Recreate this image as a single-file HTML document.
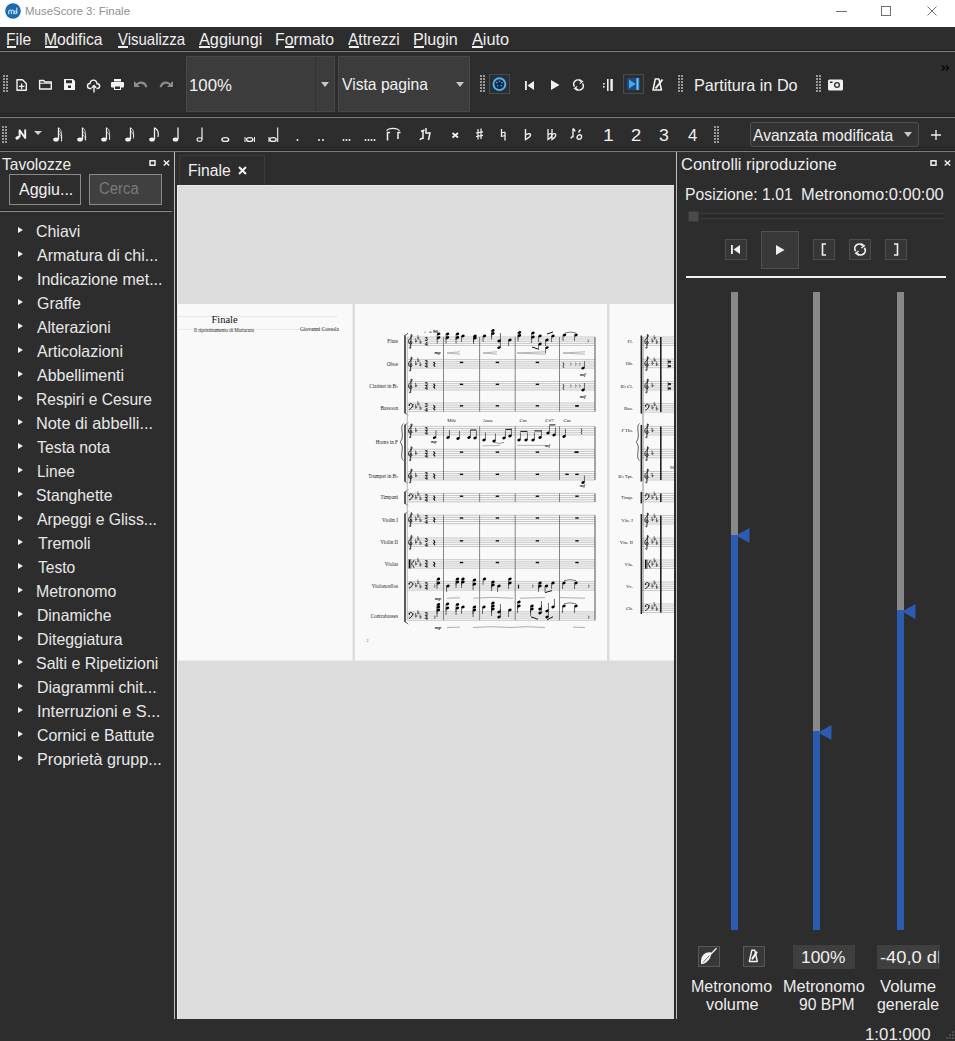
<!DOCTYPE html>
<html><head><meta charset="utf-8">
<style>
*{margin:0;padding:0;box-sizing:border-box}
html,body{width:955px;height:1041px;overflow:hidden;background:#2d2d2d;font-family:"Liberation Sans",sans-serif;color:#e6e6e6}
.a{position:absolute}
.tx{position:absolute;white-space:nowrap;line-height:1}
#title{left:0;top:0;width:955px;height:27px;background:#fff}
.hline{position:absolute;height:1px;background:#7f7f7f;box-shadow:0 -1px 0 #1f1f1f}
.vline{position:absolute;width:1px;background:#5f5f5f}
.combo{position:absolute;background:#3c3c3c;border:1px solid #474747}
.tri{position:absolute;width:0;height:0;border-left:4px solid transparent;border-right:4px solid transparent;border-top:5px solid #c8c8c8}
.handle{position:absolute;width:6px;background-image:radial-gradient(circle at 1px 1px,#999 0.95px,transparent 1.05px);background-size:3px 3px}
u{text-decoration:none;border-bottom:1px solid #f0f0f0;display:inline-block;line-height:1.05}
svg{position:absolute;overflow:visible}
.menu{position:absolute;top:31px;font-size:15.5px;color:#f2f2f2;white-space:nowrap;line-height:1}
.item{position:absolute;left:37px;font-size:15.3px;color:#e8e8e8;white-space:nowrap;line-height:1}
.arr{position:absolute;left:18px;width:0;height:0;border-top:3px solid transparent;border-bottom:3px solid transparent;border-left:5px solid #f0f0f0}
.btn{position:absolute;background:#363636;border:1px solid #4c4c4c}
</style></head>
<body>
<!-- title bar -->
<div id="title" class="a">
  <svg style="left:5px;top:3px" width="16" height="16" viewBox="0 0 16 16">
    <circle cx="8" cy="8" r="7.8" fill="#1a6bb0"/>
    <path d="M3.8 11.2V7.6M3.8 8.2c0-1.6 2.6-1.6 2.6 0v3M6.4 8.2c0-1.6 2.6-1.6 2.6 0v3M9 9.4c0-1.6 2.8-1.6 2.8 0s-2.8 1.6-2.8 0M11.8 10.6V4.6" stroke="#e8f2fa" stroke-width="1" fill="none"/>
  </svg>
    <div class="a" style="left:836px;top:11px;width:11px;height:1px;background:#707070"></div>
  <div class="a" style="left:881px;top:6px;width:10px;height:10px;border:1px solid #707070"></div>
  <svg style="left:926px;top:5px" width="12" height="12" viewBox="0 0 12 12"><path d="M1.5 1.5L10.5 10.5M10.5 1.5L1.5 10.5" stroke="#707070" stroke-width="1"/></svg>
</div>
<!-- menu -->
<div class="hline" style="left:0;top:51px;width:955px"></div>

<!-- toolbar row 1 -->
<div class="handle" style="left:3px;top:75px;height:18px"></div>
<!-- new -->
<svg style="left:0;top:0" width="130" height="100" viewBox="0 0 130 100" fill="none" stroke="#f2f2f2" stroke-width="1.4" stroke-linejoin="round">
  <path d="M17 79.7h5.5l3.8 3.8v6.8h-9.3z"/><path d="M21.6 83.5v5.5M18.9 86.3h5.5" stroke-width="1.3"/>
  <path d="M39.6 80.5h4l1.3 1.5h6.4v7H39.6z"/><path d="M39.6 83.2h11.7" stroke-width="1"/>
</svg>
<!-- save -->
<svg style="left:64px;top:79px" width="11" height="11" viewBox="0 0 11 11">
  <path d="M0 0h9l2 2v9H0z" fill="#f4f4f4"/><rect x="2" y="1.2" width="6" height="3" fill="#2d2d2d"/><rect x="4" y="6.5" width="3" height="2.5" fill="#2d2d2d"/>
</svg>
<!-- cloud -->
<svg style="left:87px;top:79px" width="14" height="14" viewBox="0 0 14 14" fill="none" stroke="#f2f2f2" stroke-width="1.4">
  <path d="M4.5 9.5H3a2.5 2.5 0 0 1 0-5 3.5 3.5 0 0 1 7 0.2 2.4 2.4 0 0 1 0.5 4.8H9.5"/><path d="M7 13.5V6.5M4.8 8.7L7 6.5l2.2 2.2"/>
</svg>
<!-- print -->
<svg style="left:111px;top:79px" width="13" height="11" viewBox="0 0 13 11">
  <rect x="3" y="0" width="7" height="2.5" fill="#f4f4f4"/><rect x="0" y="3" width="13" height="5.5" rx="1" fill="#f4f4f4"/><rect x="3" y="6.5" width="7" height="4.5" fill="#f4f4f4"/><rect x="4" y="7.5" width="5" height="2.5" fill="#2d2d2d"/>
</svg>
<!-- undo / redo -->
<svg style="left:134px;top:80px" width="14" height="8" viewBox="0 0 14 8" fill="#8c8c8c">
  <path d="M0 1l0 6h6L3.8 4.8C6.5 2.8 10 3.5 11.5 7.5L13.5 7C12 1 6.5 0.2 2.6 3.4z"/>
</svg>
<svg style="left:159px;top:80px" width="14" height="8" viewBox="0 0 14 8" fill="#8c8c8c">
  <path d="M14 1l0 6H8l2.2-2.2C7.5 2.8 4 3.5 2.5 7.5L0.5 7C2 1 7.5 0.2 11.4 3.4z"/>
</svg>

<div class="combo" style="left:186px;top:56px;width:149px;height:56px"></div>
<div class="a" style="left:315px;top:57px;width:1px;height:54px;background:#333"></div>
<div class="tri" style="left:321px;top:82px"></div>
<div class="combo" style="left:338px;top:56px;width:132px;height:56px"></div>
<div class="tri" style="left:456px;top:82px"></div>

<div class="handle" style="left:480px;top:75px;height:18px"></div>
<!-- blue midi button -->
<div class="a" style="left:489px;top:74px;width:21px;height:20px;background:#263039;border:1px solid #4d4a44"></div>
<svg style="left:0;top:0" width="520" height="100" viewBox="0 0 520 100">
  <circle cx="499.4" cy="84.2" r="5.9" fill="#0f2a45" stroke="#5ab0ec" stroke-width="1.9"/>
  <g fill="#5ab0ec"><circle cx="496.8" cy="82.6" r=".8"/><circle cx="502" cy="82.6" r=".8"/><circle cx="499.4" cy="81.3" r=".8"/><circle cx="497.6" cy="85.8" r=".8"/><circle cx="501.2" cy="85.8" r=".8"/></g>
</svg>
<!-- prev -->
<svg style="left:525px;top:81px" width="10" height="9" viewBox="0 0 10 9" fill="#f0f0f0"><rect x="0" y="0" width="1.8" height="9"/><path d="M9 0v9L2.5 4.5z"/></svg>
<!-- play -->
<svg style="left:551px;top:80px" width="9" height="10" viewBox="0 0 9 10" fill="#f0f0f0"><path d="M0 0l8.5 5L0 10z"/></svg>
<!-- loop -->
<svg style="left:573px;top:79px" width="11" height="12" viewBox="0 0 11 12" fill="none" stroke="#f0f0f0" stroke-width="1.6">
  <path d="M1.5 7.5A4 4 0 0 1 8 2.6"/><path d="M9.5 4.5A4 4 0 0 1 3 9.4"/>
  <path d="M6.5 0.5L9.5 2.5 6.8 4.6" stroke-width="1.2"/><path d="M4.5 11.5L1.5 9.5 4.2 7.4" stroke-width="1.2"/>
</svg>
<!-- count in -->
<svg style="left:603px;top:79px" width="10" height="12" viewBox="0 0 10 12" fill="#f0f0f0">
  <rect x="0" y="4" width="1.6" height="1.6"/><rect x="0" y="7" width="1.6" height="1.6"/><rect x="4" y="0" width="1.6" height="12"/><rect x="7.4" y="0" width="2.4" height="12"/>
</svg>
<!-- pan button blue -->
<div class="a" style="left:623px;top:74px;width:21px;height:20px;background:#2a2f35;border:1px solid #4d4a44"></div>
<div class="a" style="left:627px;top:78px;width:13px;height:12px;background:#1d4a78"></div>
<svg style="left:0;top:0" width="660" height="100" viewBox="0 0 660 100">
  <path d="M629 79.5L635.8 84 629 88.5z" fill="#3fa9f5"/><rect x="636.4" y="78" width="2.2" height="12" fill="#6cc0f5"/>
</svg>
<!-- metronome -->
<svg style="left:0;top:0" width="670" height="100" viewBox="0 0 670 100" fill="none" stroke="#f4f4f4">
  <path d="M655.3 79h3.6l2.6 11H653z" stroke-width="1.5" stroke-linejoin="round"/><path d="M655.5 88.5L662.5 79.5" stroke-width="2"/>
</svg>
<div class="handle" style="left:678px;top:75px;height:18px"></div>
<div class="handle" style="left:816px;top:75px;height:18px"></div>
<!-- camera -->
<svg style="left:828px;top:78px" width="15" height="13" viewBox="0 0 15 13">
  <rect x="0" y="1.5" width="15" height="11" rx="1.5" fill="#f0f0f0"/><circle cx="9" cy="7" r="3" fill="#2d2d2d"/><circle cx="9" cy="7" r="1.7" fill="#f0f0f0"/><rect x="2" y="3.5" width="2.5" height="1.5" fill="#2d2d2d"/>
</svg>
<svg style="left:0;top:0" width="955" height="80" viewBox="0 0 955 80"><path d="M942 65.5l2.5 2.5-2.5 2.5M946 65.5l2.5 2.5-2.5 2.5" fill="none" stroke="#0a0a0a" stroke-width="1.6"/></svg>
<div class="hline" style="left:0;top:117px;width:955px"></div>
<div class="tx" style="left:25.46px;top:5.87px;font-size:11.8px;color:#8f8f8f;transform:scaleX(0.9707);transform-origin:0 0;">MuseScore 3: Finale</div>
<div class="tx" style="left:6.31px;top:30.58px;font-size:16.5px;color:#f0f0f0;transform:scaleX(0.9468);transform-origin:0 0;">File</div>
<div class="a" style="left:6.61px;top:46px;width:9.54px;height:2px;background:#f0f0f0"></div>
<div class="tx" style="left:44.20px;top:30.58px;font-size:16.5px;color:#f0f0f0;transform:scaleX(0.9517);transform-origin:0 0;">Modifica</div>
<div class="a" style="left:44.50px;top:46px;width:13.08px;height:2px;background:#f0f0f0"></div>
<div class="tx" style="left:117.53px;top:30.58px;font-size:16.5px;color:#f0f0f0;transform:scaleX(0.9064);transform-origin:0 0;">Visualizza</div>
<div class="a" style="left:117.83px;top:46px;width:9.98px;height:2px;background:#f0f0f0"></div>
<div class="tx" style="left:198.56px;top:30.58px;font-size:16.5px;color:#f0f0f0;transform:scaleX(0.9862);transform-origin:0 0;">Aggiungi</div>
<div class="a" style="left:198.86px;top:46px;width:10.85px;height:2px;background:#f0f0f0"></div>
<div class="tx" style="left:275.09px;top:30.58px;font-size:16.5px;color:#f0f0f0;transform:scaleX(0.9596);transform-origin:0 0;">Formato</div>
<div class="a" style="left:285.07px;top:46px;width:8.81px;height:2px;background:#f0f0f0"></div>
<div class="tx" style="left:348.26px;top:30.58px;font-size:16.5px;color:#f0f0f0;transform:scaleX(0.9411);transform-origin:0 0;">Attrezzi</div>
<div class="a" style="left:348.56px;top:46px;width:10.36px;height:2px;background:#f0f0f0"></div>
<div class="tx" style="left:413.27px;top:30.58px;font-size:16.5px;color:#f0f0f0;transform:scaleX(0.9761);transform-origin:0 0;">Plugin</div>
<div class="a" style="left:413.57px;top:46px;width:10.74px;height:2px;background:#f0f0f0"></div>
<div class="tx" style="left:471.56px;top:30.58px;font-size:16.5px;color:#f0f0f0;transform:scaleX(0.9871);transform-origin:0 0;">Aiuto</div>
<div class="a" style="left:471.86px;top:46px;width:10.86px;height:2px;background:#f0f0f0"></div>
<div class="tx" style="left:188.74px;top:76.88px;font-size:16.5px;color:#f0f0f0;transform:scaleX(1.0153);transform-origin:0 0;">100%</div>
<div class="tx" style="left:341.72px;top:76.38px;font-size:16.5px;color:#f0f0f0;transform:scaleX(0.9496);transform-origin:0 0;">Vista pagina</div>
<div class="tx" style="left:693.66px;top:77.47px;font-size:16.5px;color:#f0f0f0;transform:scaleX(0.9825);transform-origin:0 0;">Partitura in Do</div>
<!-- toolbar row 2 -->
<div class="handle" style="left:2px;top:126px;height:18px"></div>
<svg style="left:0;top:0" width="60" height="160" viewBox="0 0 60 160">
  <path d="M19.6 137V130.2L25.2 138V129.5" fill="none" stroke="#f2f2f2" stroke-width="1.9" stroke-linejoin="round"/>
  <ellipse cx="17.6" cy="137.8" rx="2.3" ry="1.6" fill="#f2f2f2" transform="rotate(-25 17.6 137.8)"/>
</svg>
<div class="tri" style="left:34px;top:131px;border-left-width:4.5px;border-right-width:4.5px;border-top-width:4.5px;border-top-color:#d0d0d0"></div>
<!-- notes 64th,32nd,16th,8th ... -->
<svg style="left:0;top:0" width="955" height="160">
 <g fill="#f2f2f2" stroke="#f2f2f2">
  <!-- note heads+stems; x centers: 58,82,106,130,154,177,201 -->
  <g id="n64"><ellipse cx="56" cy="139.5" rx="2.8" ry="2.1" stroke="none"/><path d="M58.5 139V127.5" stroke-width="1.3"/><path d="M59 128c2 1.5 3 3 2.5 13.5M59 131c2 1.5 3 3 2.5 10M59 134c2 1 2.5 2 2.5 7" stroke-width="1" fill="none" opacity="0.7"/></g>
  <g><ellipse cx="80" cy="139.5" rx="2.8" ry="2.1" stroke="none"/><path d="M82.5 139V127.5" stroke-width="1.3"/><path d="M83 128c2 1.5 3 3 2.5 12M83 131.5c2 1.5 3 3 2.5 9M83 135c2 1 2.5 2 2.2 5" stroke-width="1" fill="none" opacity="0.7"/></g>
  <g><ellipse cx="104" cy="139.5" rx="2.8" ry="2.1" stroke="none"/><path d="M106.5 139V127.5" stroke-width="1.3"/><path d="M107 128c2 1.5 3 3 2.5 11M107 132c2 1.5 3 3 2.5 8" stroke-width="1" fill="none" opacity="0.75"/></g>
  <g><ellipse cx="128" cy="139.5" rx="2.8" ry="2.1" stroke="none"/><path d="M130.5 139V127.5" stroke-width="1.3"/><path d="M131 128c2 1.5 3 3 2.5 9M131 131.5c2 1.5 3 3 2.5 7" stroke-width="1" fill="none" opacity="0.8"/></g>
  <g><ellipse cx="152" cy="139.5" rx="2.8" ry="2.1" stroke="none"/><path d="M154.5 139V127.5" stroke-width="1.3"/><path d="M155 128c2.5 2 4 3.5 3 9" stroke-width="1.2" fill="none"/></g>
  <g><ellipse cx="175.5" cy="139.5" rx="2.8" ry="2.1" stroke="none"/><path d="M178 139V127.5" stroke-width="1.3"/></g>
  <g><ellipse cx="199.5" cy="139.5" rx="2.5" ry="1.8" fill="none" stroke-width="1.1"/><path d="M202 139V127.5" stroke-width="1.2"/></g>
  <ellipse cx="225.3" cy="139.5" rx="3.4" ry="1.9" fill="none" stroke-width="1.4"/>
  <g><ellipse cx="249.7" cy="139.5" rx="3.2" ry="1.9" fill="none" stroke-width="1.4"/><path d="M245 137v5M254.5 137v5" stroke-width="1"/></g>
  <g><ellipse cx="273" cy="139.5" rx="3.2" ry="1.9" fill="none" stroke-width="1.4"/><path d="M269 137v5M277.7 127.5v14.5" stroke-width="1.1"/></g>
  <g stroke="none"><circle cx="297.5" cy="140" r="1"/>
   <circle cx="319" cy="140" r="1"/><circle cx="323" cy="140" r="1"/>
   <circle cx="343.5" cy="140" r="1"/><circle cx="346.5" cy="140" r="1"/><circle cx="349.5" cy="140" r="1"/>
   <circle cx="365.5" cy="140" r="1"/><circle cx="368.5" cy="140" r="1"/><circle cx="371.5" cy="140" r="1"/><circle cx="374.5" cy="140" r="1"/></g>
  <!-- tie -->
  <g><path d="M386.5 131c2-3.5 11-3.5 13 0" fill="none" stroke-width="1.1"/><path d="M387.5 132v8.5M398 132v7" stroke-width="1.5"/><path d="M387.5 132.5h2.5M398 132.5h2.5" stroke-width="1.5"/></g>
  <!-- flip -->
  <g><path d="M420 140c1-2 2-1 3-2M421 131.5l3.5-1.5M423 131v8" stroke-width="1.5" fill="none"/><path d="M426 128v5h4l-1.5 7" stroke-width="1.5" fill="none"/></g>
  <!-- x -->
  <path d="M452.5 133l5.5 4.5M458 133l-5.5 4.5" stroke-width="1.8"/>
  <!-- sharp -->
  <path d="M478 129v10.5M481 128.5v10.5M476 133l7-1.2M476 136.5l7-1.2" stroke-width="1.2"/>
  <!-- natural -->
  <path d="M501.5 129v8M505 132v8.5M501.5 133l3.5-1M501.5 136.5l3.5-1" stroke-width="1.3"/>
  <!-- flat -->
  <path d="M525.5 129v10.5c2-1 5-2.5 5-4.5s-3-1.5-5 0" stroke-width="1.4" fill="none"/>
  <!-- double flat -->
  <path d="M548 129v10.5c1.5-1 3.8-2.5 3.8-4.5s-2.2-1.5-3.8 0M552 129v10.5c1.5-1 3.8-2.5 3.8-4.5s-2.2-1.5-3.8 0" stroke-width="1.3" fill="none"/>
  <!-- voice -->
  <path d="M571 138.5c0-1.5 2-2.2 2-1V128.5M573 128.5c1 1 2 1.5 2 3M577 137c1-3 5-3 4.5 0s-4.5 3-4.5 0M580.5 129.5l-2 3" stroke-width="1.4" fill="none"/>
 </g>
</svg>
<div class="handle" style="left:714px;top:126px;height:18px"></div>
<div class="combo" style="left:750px;top:122px;width:169px;height:25px;background:#333333;border-color:#505050;border-radius:3px"></div>
<div class="tri" style="left:904px;top:132px"></div>
<svg style="left:931px;top:130px" width="10" height="10" viewBox="0 0 10 10"><path d="M5 0v10M0 5h10" stroke="#f0f0f0" stroke-width="1.3"/></svg>
<div class="a" style="left:0;top:113px;width:955px;height:1px;background:#242424"></div>
<div class="a" style="left:0;top:147px;width:955px;height:1px;background:#242424"></div>
<div class="hline" style="left:0;top:151px;width:955px"></div>
<!-- left panel -->
<svg style="left:149px;top:160px" width="7" height="6" viewBox="0 0 7 6"><rect x="1" y="0.8" width="5" height="4.4" fill="none" stroke="#f0f0f0" stroke-width="1.5"/></svg>
<svg style="left:163px;top:160px" width="7" height="6" viewBox="0 0 7 6"><path d="M0.8 0.5L6.2 5.5M6.2 0.5L0.8 5.5" stroke="#f0f0f0" stroke-width="1.5"/></svg>
<div class="a" style="left:9px;top:174px;width:72px;height:31px;border:1px solid #8a8a8a;background:#2d2d2d"></div>
<div class="a" style="left:89px;top:174px;width:73px;height:31px;border:1px solid #8a8a8a;background:#404040"></div>
<div class="hline" style="left:0;top:211px;width:172px;background:#8a8a8a"></div>
<div class="vline" style="left:174px;top:152px;height:867px;background:#bdbdbd"></div>
<div class="tx" style="left:602.74px;top:126.57px;font-size:16.5px;color:#f0f0f0;transform:scaleX(1.1771);transform-origin:0 0;">1</div>
<div class="tx" style="left:630.98px;top:126.57px;font-size:16.5px;color:#f0f0f0;transform:scaleX(1.1128);transform-origin:0 0;">2</div>
<div class="tx" style="left:659.34px;top:126.57px;font-size:16.5px;color:#f0f0f0;transform:scaleX(1.0718);transform-origin:0 0;">3</div>
<div class="tx" style="left:687.63px;top:126.57px;font-size:16.5px;color:#f0f0f0;transform:scaleX(1.0081);transform-origin:0 0;">4</div>
<div class="tx" style="left:753.36px;top:127.47px;font-size:16.5px;color:#f0f0f0;transform:scaleX(0.9457);transform-origin:0 0;">Avanzata modificata</div>
<div class="tx" style="left:1.95px;top:155.97px;font-size:16.5px;color:#ececec;transform:scaleX(0.9423);transform-origin:0 0;">Tavolozze</div>
<div class="tx" style="left:18.86px;top:180.97px;font-size:16.5px;color:#f0f0f0;transform:scaleX(0.9704);transform-origin:0 0;">Aggiu...</div>
<div class="tx" style="left:98.85px;top:181.40px;font-size:16px;color:#7a7a7a;transform:scaleX(0.9327);transform-origin:0 0;">Cerca</div>
<div class="arr" style="top:227px"></div>
<div class="tx" style="left:36.10px;top:222.78px;font-size:16.5px;color:#e8e8e8;transform:scaleX(0.9651);transform-origin:0 0;">Chiavi</div>
<div class="arr" style="top:251px"></div>
<div class="tx" style="left:37.46px;top:246.78px;font-size:16.5px;color:#e8e8e8;transform:scaleX(0.9710);transform-origin:0 0;">Armatura di chi...</div>
<div class="arr" style="top:275px"></div>
<div class="tx" style="left:36.52px;top:270.78px;font-size:16.5px;color:#e8e8e8;transform:scaleX(0.9706);transform-origin:0 0;">Indicazione met...</div>
<div class="arr" style="top:299px"></div>
<div class="tx" style="left:36.50px;top:294.78px;font-size:16.5px;color:#e8e8e8;transform:scaleX(0.9656);transform-origin:0 0;">Graffe</div>
<div class="arr" style="top:323px"></div>
<div class="tx" style="left:37.46px;top:318.78px;font-size:16.5px;color:#e8e8e8;transform:scaleX(0.9578);transform-origin:0 0;">Alterazioni</div>
<div class="arr" style="top:347px"></div>
<div class="tx" style="left:37.46px;top:342.78px;font-size:16.5px;color:#e8e8e8;transform:scaleX(0.9667);transform-origin:0 0;">Articolazioni</div>
<div class="arr" style="top:371px"></div>
<div class="tx" style="left:37.46px;top:366.78px;font-size:16.5px;color:#e8e8e8;transform:scaleX(0.9681);transform-origin:0 0;">Abbellimenti</div>
<div class="arr" style="top:395px"></div>
<div class="tx" style="left:35.92px;top:390.78px;font-size:16.5px;color:#e8e8e8;transform:scaleX(0.9435);transform-origin:0 0;">Respiri e Cesure</div>
<div class="arr" style="top:419px"></div>
<div class="tx" style="left:36.15px;top:414.78px;font-size:16.5px;color:#e8e8e8;transform:scaleX(0.9891);transform-origin:0 0;">Note di abbelli...</div>
<div class="arr" style="top:443px"></div>
<div class="tx" style="left:36.94px;top:438.78px;font-size:16.5px;color:#e8e8e8;transform:scaleX(0.9594);transform-origin:0 0;">Testa nota</div>
<div class="arr" style="top:467px"></div>
<div class="tx" style="left:36.72px;top:462.78px;font-size:16.5px;color:#e8e8e8;transform:scaleX(0.9378);transform-origin:0 0;">Linee</div>
<div class="arr" style="top:491px"></div>
<div class="tx" style="left:36.29px;top:486.78px;font-size:16.5px;color:#e8e8e8;transform:scaleX(0.9582);transform-origin:0 0;">Stanghette</div>
<div class="arr" style="top:515px"></div>
<div class="tx" style="left:37.26px;top:510.77px;font-size:16.5px;color:#e8e8e8;transform:scaleX(0.9547);transform-origin:0 0;">Arpeggi e Gliss...</div>
<div class="arr" style="top:539px"></div>
<div class="tx" style="left:37.84px;top:534.77px;font-size:16.5px;color:#e8e8e8;transform:scaleX(0.9655);transform-origin:0 0;">Tremoli</div>
<div class="arr" style="top:563px"></div>
<div class="tx" style="left:37.85px;top:558.77px;font-size:16.5px;color:#e8e8e8;transform:scaleX(0.9452);transform-origin:0 0;">Testo</div>
<div class="arr" style="top:587px"></div>
<div class="tx" style="left:36.49px;top:582.77px;font-size:16.5px;color:#e8e8e8;transform:scaleX(0.9640);transform-origin:0 0;">Metronomo</div>
<div class="arr" style="top:611px"></div>
<div class="tx" style="left:37.00px;top:606.77px;font-size:16.5px;color:#e8e8e8;transform:scaleX(0.9544);transform-origin:0 0;">Dinamiche</div>
<div class="arr" style="top:635px"></div>
<div class="tx" style="left:36.99px;top:630.77px;font-size:16.5px;color:#e8e8e8;transform:scaleX(0.9633);transform-origin:0 0;">Diteggiatura</div>
<div class="arr" style="top:659px"></div>
<div class="tx" style="left:36.28px;top:654.77px;font-size:16.5px;color:#e8e8e8;transform:scaleX(0.9663);transform-origin:0 0;">Salti e Ripetizioni</div>
<div class="arr" style="top:683px"></div>
<div class="tx" style="left:36.98px;top:678.77px;font-size:16.5px;color:#e8e8e8;transform:scaleX(0.9666);transform-origin:0 0;">Diagrammi chit...</div>
<div class="arr" style="top:707px"></div>
<div class="tx" style="left:36.79px;top:702.77px;font-size:16.5px;color:#e8e8e8;transform:scaleX(0.9883);transform-origin:0 0;">Interruzioni e S...</div>
<div class="arr" style="top:731px"></div>
<div class="tx" style="left:36.71px;top:726.77px;font-size:16.5px;color:#e8e8e8;transform:scaleX(0.9614);transform-origin:0 0;">Cornici e Battute</div>
<div class="arr" style="top:755px"></div>
<div class="tx" style="left:36.97px;top:750.77px;font-size:16.5px;color:#e8e8e8;transform:scaleX(0.9787);transform-origin:0 0;">Proprietà grupp...</div>
<!-- tab bar -->
<div class="a" style="left:179px;top:155px;width:86px;height:31px;background:#2d2d2d;border:1px solid #3a3a3a;border-bottom:none"></div>
<svg style="left:238px;top:166px" width="9" height="9" viewBox="0 0 9 9"><path d="M1 1L8 8M8 1L1 8" stroke="#f5f5f5" stroke-width="2"/></svg>
<!-- canvas -->
<div class="a" style="left:177px;top:185px;width:497px;height:834px;background:#dcdcdc;border-left:1px solid #ebebeb;border-top:1px solid #ebebeb"></div>
<div class="vline" style="left:676px;top:152px;height:867px;background:#bdbdbd"></div>
<!-- right panel -->
<svg style="left:930px;top:160px" width="7" height="6" viewBox="0 0 7 6"><rect x="1" y="0.8" width="5" height="4.4" fill="none" stroke="#f0f0f0" stroke-width="1.5"/></svg>
<svg style="left:944px;top:160px" width="7" height="6" viewBox="0 0 7 6"><path d="M0.8 0.5L6.2 5.5M6.2 0.5L0.8 5.5" stroke="#f0f0f0" stroke-width="1.5"/></svg>
<!-- slider -->
<div class="a" style="left:700px;top:213px;width:245px;height:6px;border-top:1px solid #3c3c3c;border-bottom:1px solid #3c3c3c;background:#2a2a2a"></div>
<div class="a" style="left:688px;top:211px;width:11px;height:11px;background:#4a4a4a;border:1px solid #3a3a3a;border-radius:1px"></div>
<!-- transport buttons -->
<div class="btn" style="left:725px;top:239px;width:22px;height:21px"></div>
<svg style="left:731px;top:245px" width="10" height="9" viewBox="0 0 10 9" fill="#f0f0f0"><rect x="0" y="0" width="1.8" height="9"/><path d="M9 0v9L2.5 4.5z"/></svg>
<div class="btn" style="left:761px;top:231px;width:38px;height:38px;background:#393939;border-color:#505050"></div>
<svg style="left:776px;top:245px" width="9" height="10" viewBox="0 0 9 10" fill="#f0f0f0"><path d="M0 0l8.5 5L0 10z"/></svg>
<div class="btn" style="left:813px;top:239px;width:22px;height:21px"></div>
<svg style="left:821px;top:243px" width="6" height="13" viewBox="0 0 6 13"><path d="M5 1H1.5v11H5" fill="none" stroke="#f0f0f0" stroke-width="1.6"/></svg>
<div class="btn" style="left:849px;top:239px;width:22px;height:21px"></div>
<svg style="left:854px;top:243px" width="12" height="13" viewBox="0 0 11 12" fill="none" stroke="#f0f0f0" stroke-width="1.6">
  <path d="M1.5 7.5A4 4 0 0 1 8 2.6"/><path d="M9.5 4.5A4 4 0 0 1 3 9.4"/>
  <path d="M6.5 0.5L9.5 2.5 6.8 4.6" stroke-width="1.2"/><path d="M4.5 11.5L1.5 9.5 4.2 7.4" stroke-width="1.2"/>
</svg>
<div class="btn" style="left:885px;top:239px;width:22px;height:21px"></div>
<svg style="left:893px;top:243px" width="6" height="13" viewBox="0 0 6 13"><path d="M1 1h3.5v11H1" fill="none" stroke="#f0f0f0" stroke-width="1.6"/></svg>
<div class="a" style="left:686px;top:276px;width:260px;height:2px;background:#f0f0f0"></div>
<!-- volume sliders -->
<div class="a" style="left:731px;top:292px;width:7px;height:243px;background:#888"></div>
<div class="a" style="left:731px;top:535px;width:7px;height:395px;background:#2c5cb2"></div>
<svg style="left:736px;top:528px" width="14" height="15" viewBox="0 0 14 15"><path d="M0 7.5L13.5 0v15z" fill="#2c5cb2"/></svg>
<div class="a" style="left:813px;top:292px;width:7px;height:439px;background:#888"></div>
<div class="a" style="left:813px;top:731px;width:7px;height:199px;background:#2c5cb2"></div>
<svg style="left:818px;top:725px" width="14" height="15" viewBox="0 0 14 15"><path d="M0 7.5L13.5 0v15z" fill="#2c5cb2"/></svg>
<div class="a" style="left:897px;top:292px;width:7px;height:318px;background:#888"></div>
<div class="a" style="left:897px;top:610px;width:7px;height:320px;background:#2c5cb2"></div>
<svg style="left:902px;top:604px" width="14" height="15" viewBox="0 0 14 15"><path d="M0 7.5L13.5 0v15z" fill="#2c5cb2"/></svg>
<!-- bottom buttons -->
<div class="btn" style="left:698px;top:946px;width:22px;height:21px;background:#383838;border-color:#575757"></div>
<svg style="left:0;top:0" width="720" height="1041" viewBox="0 0 720 1041">
  <path d="M701.2 964.3c-.8-4.5.5-9.5 5-11.5 1.5-.6 3-.8 4.8-.6.5 5-2.8 11-9.8 12.1z" fill="#f4f4f4"/>
  <path d="M703 962.5L710.5 954.8M710 955L716.5 948.3" stroke="#f4f4f4" stroke-width="1.3"/>
  <path d="M703 962.5L709.5 955.5" stroke="#383838" stroke-width=".7"/>
</svg>
<div class="btn" style="left:743px;top:946px;width:22px;height:21px;background:#383838;border-color:#575757"></div>
<svg style="left:0;top:0" width="770" height="1041" viewBox="0 0 770 1041" fill="none" stroke="#f4f4f4">
  <path d="M751.8 950.3h3l2.5 11.2h-8z" stroke-width="1.4" stroke-linejoin="round"/><path d="M752.5 958.5L756.5 952.5" stroke-width="2.2" stroke-linecap="round"/>
</svg>
<div class="a" style="left:793px;top:945px;width:62px;height:24px;background:#3f3f3f"></div>
<div class="a" style="left:877px;top:945px;width:63px;height:24px;background:#3f3f3f;overflow:hidden">
  </div>
<svg style="left:943px;top:1029px" width="12" height="12" viewBox="0 0 12 12" fill="#777"><circle cx="10" cy="3" r="0.8"/><circle cx="7" cy="6" r="0.8"/><circle cx="10" cy="6" r="0.8"/><circle cx="4" cy="9" r="0.8"/><circle cx="7" cy="9" r="0.8"/><circle cx="10" cy="9" r="0.8"/></svg>
<div class="tx" style="left:187.71px;top:163.20px;font-size:16px;color:#f0f0f0;transform:scaleX(0.9793);transform-origin:0 0;">Finale</div>
<div class="tx" style="left:680.68px;top:155.97px;font-size:16.5px;color:#ececec;transform:scaleX(0.9990);transform-origin:0 0;">Controlli riproduzione</div>
<div class="tx" style="left:685.40px;top:185.88px;font-size:16.5px;color:#ececec;transform:scaleX(0.9542);transform-origin:0 0;">Posizione: 1.01</div>
<div class="tx" style="left:801.24px;top:185.88px;font-size:16.5px;color:#ececec;transform:scaleX(0.9973);transform-origin:0 0;">Metronomo:0:00:00</div>
<div class="tx" style="left:801.00px;top:949.18px;font-size:16.5px;color:#f0f0f0;transform:scaleX(1.0499);transform-origin:0 0;">100%</div>
<div class="a" style="left:877px;top:945px;width:62px;height:23px;overflow:hidden"><div class="tx" style="left:2.78px;top:4.17px;font-size:16.5px;color:#f0f0f0;transform:scaleX(1.1093);transform-origin:0 0;">-40,0 dB</div></div>
<div class="tx" style="left:690.68px;top:977.68px;font-size:16.5px;color:#ececec;transform:scaleX(0.9726);transform-origin:0 0;">Metronomo</div>
<div class="tx" style="left:706.16px;top:995.77px;font-size:16.5px;color:#ececec;transform:scaleX(0.9880);transform-origin:0 0;">volume</div>
<div class="tx" style="left:782.67px;top:977.68px;font-size:16.5px;color:#ececec;transform:scaleX(0.9788);transform-origin:0 0;">Metronomo</div>
<div class="tx" style="left:798.80px;top:995.77px;font-size:16.5px;color:#ececec;transform:scaleX(0.9482);transform-origin:0 0;">90 BPM</div>
<div class="tx" style="left:879.92px;top:977.68px;font-size:16.5px;color:#ececec;transform:scaleX(1.0176);transform-origin:0 0;">Volume</div>
<div class="tx" style="left:877.32px;top:995.77px;font-size:16.5px;color:#ececec;transform:scaleX(0.9652);transform-origin:0 0;">generale</div>
<div class="tx" style="left:864.74px;top:1026.47px;font-size:16.5px;color:#ececec;transform:scaleX(1.0197);transform-origin:0 0;">1:01:000</div>
<svg style="left:0;top:0" width="955" height="1041" viewBox="0 0 955 1041">
<defs><clipPath id="cv"><rect x="177" y="185" width="497" height="834"/></clipPath></defs>
<g clip-path="url(#cv)">
<rect x="178" y="304" width="174.5" height="356.5" fill="#f9f9f9"/>
<rect x="355" y="304" width="252" height="356.5" fill="#f9f9f9"/>
<rect x="609.5" y="304" width="80" height="356.5" fill="#f9f9f9"/>
<path d="M178 316.6H337M178 329.3H337" stroke="#e6e6e6" stroke-width="1"/>
<text x="224.5" y="323" font-family="Liberation Serif" font-size="10.5" text-anchor="middle" fill="#111">Finale</text>
<text x="224" y="331.5" font-family="Liberation Serif" font-size="5.6" text-anchor="middle" fill="#222" textLength="60" lengthAdjust="spacingAndGlyphs">Il ripristinamento di Mariacuta</text>
<text x="339" y="330.8" font-family="Liberation Serif" font-size="5.6" text-anchor="end" fill="#222" textLength="39" lengthAdjust="spacingAndGlyphs">Giovanni Cossola</text>
<path d="M407.3 337.00H595M407.3 339.12H595M407.3 341.24H595M407.3 343.36H595M407.3 345.48H595" stroke="#8a8a8a" stroke-width="0.45" fill="none"/>
<path d="M407.3 359.60H595M407.3 361.72H595M407.3 363.84H595M407.3 365.96H595M407.3 368.08H595" stroke="#8a8a8a" stroke-width="0.45" fill="none"/>
<path d="M407.3 381.50H595M407.3 383.62H595M407.3 385.74H595M407.3 387.86H595M407.3 389.98H595" stroke="#8a8a8a" stroke-width="0.45" fill="none"/>
<path d="M407.3 403.00H595M407.3 405.12H595M407.3 407.24H595M407.3 409.36H595M407.3 411.48H595" stroke="#8a8a8a" stroke-width="0.45" fill="none"/>
<path d="M407.3 426.40H595M407.3 428.52H595M407.3 430.64H595M407.3 432.76H595M407.3 434.88H595" stroke="#8a8a8a" stroke-width="0.45" fill="none"/>
<path d="M407.3 449.30H595M407.3 451.42H595M407.3 453.54H595M407.3 455.66H595M407.3 457.78H595" stroke="#8a8a8a" stroke-width="0.45" fill="none"/>
<path d="M407.3 471.50H595M407.3 473.62H595M407.3 475.74H595M407.3 477.86H595M407.3 479.98H595" stroke="#8a8a8a" stroke-width="0.45" fill="none"/>
<path d="M407.3 493.40H595M407.3 495.52H595M407.3 497.64H595M407.3 499.76H595M407.3 501.88H595" stroke="#8a8a8a" stroke-width="0.45" fill="none"/>
<path d="M407.3 515.20H595M407.3 517.32H595M407.3 519.44H595M407.3 521.56H595M407.3 523.68H595" stroke="#8a8a8a" stroke-width="0.45" fill="none"/>
<path d="M407.3 538.00H595M407.3 540.12H595M407.3 542.24H595M407.3 544.36H595M407.3 546.48H595" stroke="#8a8a8a" stroke-width="0.45" fill="none"/>
<path d="M407.3 559.70H595M407.3 561.82H595M407.3 563.94H595M407.3 566.06H595M407.3 568.18H595" stroke="#8a8a8a" stroke-width="0.45" fill="none"/>
<path d="M407.3 581.60H595M407.3 583.72H595M407.3 585.84H595M407.3 587.96H595M407.3 590.08H595" stroke="#8a8a8a" stroke-width="0.45" fill="none"/>
<path d="M407.3 611.80H595M407.3 613.92H595M407.3 616.04H595M407.3 618.16H595M407.3 620.28H595" stroke="#8a8a8a" stroke-width="0.45" fill="none"/>
<path d="M443.5 337V411.48" stroke="#555" stroke-width="0.7"/>
<path d="M479.6 337V411.48" stroke="#555" stroke-width="0.7"/>
<path d="M515.2 337V411.48" stroke="#555" stroke-width="0.7"/>
<path d="M559.5 337V411.48" stroke="#555" stroke-width="0.7"/>
<path d="M595 337V411.48" stroke="#777" stroke-width="1.3"/>
<path d="M405 335.5V412.98" stroke="#333" stroke-width="1.6"/>
<path d="M404.5 335.5q2 0 3.5 -2.5M404.5 412.98q2 0 3.5 2.5" stroke="#333" stroke-width="0.8" fill="none"/>
<path d="M443.5 426.4V479.98" stroke="#555" stroke-width="0.7"/>
<path d="M479.6 426.4V479.98" stroke="#555" stroke-width="0.7"/>
<path d="M515.2 426.4V479.98" stroke="#555" stroke-width="0.7"/>
<path d="M559.5 426.4V479.98" stroke="#555" stroke-width="0.7"/>
<path d="M595 426.4V479.98" stroke="#777" stroke-width="1.3"/>
<path d="M405 424.9V481.48" stroke="#333" stroke-width="1.6"/>
<path d="M404.5 424.9q2 0 3.5 -2.5M404.5 481.48q2 0 3.5 2.5" stroke="#333" stroke-width="0.8" fill="none"/>
<path d="M443.5 493.4V501.88" stroke="#555" stroke-width="0.7"/>
<path d="M479.6 493.4V501.88" stroke="#555" stroke-width="0.7"/>
<path d="M515.2 493.4V501.88" stroke="#555" stroke-width="0.7"/>
<path d="M559.5 493.4V501.88" stroke="#555" stroke-width="0.7"/>
<path d="M595 493.4V501.88" stroke="#777" stroke-width="1.3"/>
<path d="M405 491.9V503.38" stroke="#333" stroke-width="1.6"/>
<path d="M404.5 491.9q2 0 3.5 -2.5M404.5 503.38q2 0 3.5 2.5" stroke="#333" stroke-width="0.8" fill="none"/>
<path d="M443.5 515.2V620.28" stroke="#555" stroke-width="0.7"/>
<path d="M479.6 515.2V620.28" stroke="#555" stroke-width="0.7"/>
<path d="M515.2 515.2V620.28" stroke="#555" stroke-width="0.7"/>
<path d="M559.5 515.2V620.28" stroke="#555" stroke-width="0.7"/>
<path d="M595 515.2V620.28" stroke="#777" stroke-width="1.3"/>
<path d="M405 513.7V621.78" stroke="#333" stroke-width="1.6"/>
<path d="M404.5 513.7q2 0 3.5 -2.5M404.5 621.78q2 0 3.5 2.5" stroke="#333" stroke-width="0.8" fill="none"/>
<path d="M407.3 337V620.28" stroke="#bbb" stroke-width="1"/>
<path d="M403.5 423.5c-3 2-1 8-1.2 12.5 0 3-1.3 5.5-2.3 6 1 .5 2.3 3 2.3 6-.2 4.5-1.8 10.5 1.2 12.5" stroke="#333" stroke-width="0.8" fill="none"/>
<text x="398" y="342.5" font-family="Liberation Serif" font-size="5.2" text-anchor="end" fill="#1a1a1a">Flute</text>
<text x="398" y="365.5" font-family="Liberation Serif" font-size="5.2" text-anchor="end" fill="#1a1a1a">Oboe</text>
<text x="398" y="387.5" font-family="Liberation Serif" font-size="5.2" text-anchor="end" fill="#1a1a1a">Clarinet in B♭</text>
<text x="398" y="409.5" font-family="Liberation Serif" font-size="5.2" text-anchor="end" fill="#1a1a1a">Bassoon</text>
<text x="398" y="443.5" font-family="Liberation Serif" font-size="5.2" text-anchor="end" fill="#1a1a1a">Horns in F</text>
<text x="398" y="477.5" font-family="Liberation Serif" font-size="5.2" text-anchor="end" fill="#1a1a1a">Trumpet in B♭</text>
<text x="398" y="499.0" font-family="Liberation Serif" font-size="5.2" text-anchor="end" fill="#1a1a1a">Timpani</text>
<text x="398" y="521.5" font-family="Liberation Serif" font-size="5.2" text-anchor="end" fill="#1a1a1a">Violin I</text>
<text x="398" y="544.0" font-family="Liberation Serif" font-size="5.2" text-anchor="end" fill="#1a1a1a">Violin II</text>
<text x="398" y="566.0" font-family="Liberation Serif" font-size="5.2" text-anchor="end" fill="#1a1a1a">Violas</text>
<text x="398" y="588.0" font-family="Liberation Serif" font-size="5.2" text-anchor="end" fill="#1a1a1a">Violoncellos</text>
<text x="398" y="618.0" font-family="Liberation Serif" font-size="5.2" text-anchor="end" fill="#1a1a1a">Contrabasses</text>
<path d="M410.59999999999997 348.2c-.9.3-1.6-.3-1-1M410.59999999999997 348.2L411.09999999999997 334.6c.9-.5 1.4 1 .3 2.4-1.3 1.5-2.9 2.6-2.9 4.6 0 1.6 1.2 2.6 2.4 2.5 1.3-.2 1.5-2.3.2-2.6-.9-.2-1.6.6-1.2 1.4" stroke="#111" stroke-width="0.85" fill="none"/>
<path d="M415.6 338.2V342.4c.8-.3 1.4-.8 1.4-1.4s-.9-.6-1.4 0" stroke="#111" stroke-width=".55" fill="none"/>
<path d="M417.8 335.1V339.3c.8-.3 1.4-.8 1.4-1.4s-.9-.6-1.4 0" stroke="#111" stroke-width=".55" fill="none"/>
<path d="M420.0 339.3V343.5c.8-.3 1.4-.8 1.4-1.4s-.9-.6-1.4 0" stroke="#111" stroke-width=".55" fill="none"/>
<text x="426.2" y="341.2" font-family="Liberation Sans" font-weight="bold" font-size="5.4" text-anchor="middle" fill="#000">3</text>
<text x="426.2" y="345.5" font-family="Liberation Sans" font-weight="bold" font-size="5.4" text-anchor="middle" fill="#000">4</text>
<path d="M410.59999999999997 370.8c-.9.3-1.6-.3-1-1M410.59999999999997 370.8L411.09999999999997 357.20000000000005c.9-.5 1.4 1 .3 2.4-1.3 1.5-2.9 2.6-2.9 4.6 0 1.6 1.2 2.6 2.4 2.5 1.3-.2 1.5-2.3.2-2.6-.9-.2-1.6.6-1.2 1.4" stroke="#111" stroke-width="0.85" fill="none"/>
<path d="M415.6 360.8V365.0c.8-.3 1.4-.8 1.4-1.4s-.9-.6-1.4 0" stroke="#111" stroke-width=".55" fill="none"/>
<path d="M417.8 357.70000000000005V361.90000000000003c.8-.3 1.4-.8 1.4-1.4s-.9-.6-1.4 0" stroke="#111" stroke-width=".55" fill="none"/>
<path d="M420.0 361.90000000000003V366.1c.8-.3 1.4-.8 1.4-1.4s-.9-.6-1.4 0" stroke="#111" stroke-width=".55" fill="none"/>
<text x="426.2" y="363.8" font-family="Liberation Sans" font-weight="bold" font-size="5.4" text-anchor="middle" fill="#000">3</text>
<text x="426.2" y="368.1" font-family="Liberation Sans" font-weight="bold" font-size="5.4" text-anchor="middle" fill="#000">4</text>
<path d="M410.59999999999997 392.7c-.9.3-1.6-.3-1-1M410.59999999999997 392.7L411.09999999999997 379.1c.9-.5 1.4 1 .3 2.4-1.3 1.5-2.9 2.6-2.9 4.6 0 1.6 1.2 2.6 2.4 2.5 1.3-.2 1.5-2.3.2-2.6-.9-.2-1.6.6-1.2 1.4" stroke="#111" stroke-width="0.85" fill="none"/>
<path d="M415.6 382.7V386.9c.8-.3 1.4-.8 1.4-1.4s-.9-.6-1.4 0" stroke="#111" stroke-width=".55" fill="none"/>
<text x="426.2" y="385.7" font-family="Liberation Sans" font-weight="bold" font-size="5.4" text-anchor="middle" fill="#000">3</text>
<text x="426.2" y="390.0" font-family="Liberation Sans" font-weight="bold" font-size="5.4" text-anchor="middle" fill="#000">4</text>
<path d="M409.0 404.9c.8-2 3.8-1.8 3.5.8-.2 2-1.9 3.2-3.5 3.9" stroke="#111" stroke-width="1" fill="none"/><circle cx="409.3" cy="405.3" r=".8" fill="#111"/><circle cx="413.4" cy="404.3" r=".45" fill="#111"/><circle cx="413.4" cy="406" r=".45" fill="#111"/>
<path d="M415.6 404.2V408.4c.8-.3 1.4-.8 1.4-1.4s-.9-.6-1.4 0" stroke="#111" stroke-width=".55" fill="none"/>
<path d="M417.8 401.1V405.3c.8-.3 1.4-.8 1.4-1.4s-.9-.6-1.4 0" stroke="#111" stroke-width=".55" fill="none"/>
<path d="M420.0 405.3V409.5c.8-.3 1.4-.8 1.4-1.4s-.9-.6-1.4 0" stroke="#111" stroke-width=".55" fill="none"/>
<text x="426.2" y="407.2" font-family="Liberation Sans" font-weight="bold" font-size="5.4" text-anchor="middle" fill="#000">3</text>
<text x="426.2" y="411.5" font-family="Liberation Sans" font-weight="bold" font-size="5.4" text-anchor="middle" fill="#000">4</text>
<path d="M410.59999999999997 437.59999999999997c-.9.3-1.6-.3-1-1M410.59999999999997 437.59999999999997L411.09999999999997 424.0c.9-.5 1.4 1 .3 2.4-1.3 1.5-2.9 2.6-2.9 4.6 0 1.6 1.2 2.6 2.4 2.5 1.3-.2 1.5-2.3.2-2.6-.9-.2-1.6.6-1.2 1.4" stroke="#111" stroke-width="0.85" fill="none"/>
<path d="M415.6 427.59999999999997V431.79999999999995c.8-.3 1.4-.8 1.4-1.4s-.9-.6-1.4 0" stroke="#111" stroke-width=".55" fill="none"/>
<text x="426.2" y="430.59999999999997" font-family="Liberation Sans" font-weight="bold" font-size="5.4" text-anchor="middle" fill="#000">3</text>
<text x="426.2" y="434.9" font-family="Liberation Sans" font-weight="bold" font-size="5.4" text-anchor="middle" fill="#000">4</text>
<path d="M410.59999999999997 460.5c-.9.3-1.6-.3-1-1M410.59999999999997 460.5L411.09999999999997 446.90000000000003c.9-.5 1.4 1 .3 2.4-1.3 1.5-2.9 2.6-2.9 4.6 0 1.6 1.2 2.6 2.4 2.5 1.3-.2 1.5-2.3.2-2.6-.9-.2-1.6.6-1.2 1.4" stroke="#111" stroke-width="0.85" fill="none"/>
<path d="M415.6 450.5V454.7c.8-.3 1.4-.8 1.4-1.4s-.9-.6-1.4 0" stroke="#111" stroke-width=".55" fill="none"/>
<text x="426.2" y="453.5" font-family="Liberation Sans" font-weight="bold" font-size="5.4" text-anchor="middle" fill="#000">3</text>
<text x="426.2" y="457.8" font-family="Liberation Sans" font-weight="bold" font-size="5.4" text-anchor="middle" fill="#000">4</text>
<path d="M410.59999999999997 482.7c-.9.3-1.6-.3-1-1M410.59999999999997 482.7L411.09999999999997 469.1c.9-.5 1.4 1 .3 2.4-1.3 1.5-2.9 2.6-2.9 4.6 0 1.6 1.2 2.6 2.4 2.5 1.3-.2 1.5-2.3.2-2.6-.9-.2-1.6.6-1.2 1.4" stroke="#111" stroke-width="0.85" fill="none"/>
<path d="M415.6 472.7V476.9c.8-.3 1.4-.8 1.4-1.4s-.9-.6-1.4 0" stroke="#111" stroke-width=".55" fill="none"/>
<text x="426.2" y="475.7" font-family="Liberation Sans" font-weight="bold" font-size="5.4" text-anchor="middle" fill="#000">3</text>
<text x="426.2" y="480.0" font-family="Liberation Sans" font-weight="bold" font-size="5.4" text-anchor="middle" fill="#000">4</text>
<path d="M409.0 495.29999999999995c.8-2 3.8-1.8 3.5.8-.2 2-1.9 3.2-3.5 3.9" stroke="#111" stroke-width="1" fill="none"/><circle cx="409.3" cy="495.7" r=".8" fill="#111"/><circle cx="413.4" cy="494.7" r=".45" fill="#111"/><circle cx="413.4" cy="496.4" r=".45" fill="#111"/>
<path d="M415.6 494.59999999999997V498.79999999999995c.8-.3 1.4-.8 1.4-1.4s-.9-.6-1.4 0" stroke="#111" stroke-width=".55" fill="none"/>
<path d="M417.8 491.5V495.7c.8-.3 1.4-.8 1.4-1.4s-.9-.6-1.4 0" stroke="#111" stroke-width=".55" fill="none"/>
<path d="M420.0 495.7V499.9c.8-.3 1.4-.8 1.4-1.4s-.9-.6-1.4 0" stroke="#111" stroke-width=".55" fill="none"/>
<text x="426.2" y="497.59999999999997" font-family="Liberation Sans" font-weight="bold" font-size="5.4" text-anchor="middle" fill="#000">3</text>
<text x="426.2" y="501.9" font-family="Liberation Sans" font-weight="bold" font-size="5.4" text-anchor="middle" fill="#000">4</text>
<path d="M410.59999999999997 526.4000000000001c-.9.3-1.6-.3-1-1M410.59999999999997 526.4000000000001L411.09999999999997 512.8000000000001c.9-.5 1.4 1 .3 2.4-1.3 1.5-2.9 2.6-2.9 4.6 0 1.6 1.2 2.6 2.4 2.5 1.3-.2 1.5-2.3.2-2.6-.9-.2-1.6.6-1.2 1.4" stroke="#111" stroke-width="0.85" fill="none"/>
<path d="M415.6 516.4000000000001V520.6000000000001c.8-.3 1.4-.8 1.4-1.4s-.9-.6-1.4 0" stroke="#111" stroke-width=".55" fill="none"/>
<path d="M417.8 513.3000000000001V517.5000000000001c.8-.3 1.4-.8 1.4-1.4s-.9-.6-1.4 0" stroke="#111" stroke-width=".55" fill="none"/>
<path d="M420.0 517.5V521.7c.8-.3 1.4-.8 1.4-1.4s-.9-.6-1.4 0" stroke="#111" stroke-width=".55" fill="none"/>
<text x="426.2" y="519.4000000000001" font-family="Liberation Sans" font-weight="bold" font-size="5.4" text-anchor="middle" fill="#000">3</text>
<text x="426.2" y="523.7" font-family="Liberation Sans" font-weight="bold" font-size="5.4" text-anchor="middle" fill="#000">4</text>
<path d="M410.59999999999997 549.2c-.9.3-1.6-.3-1-1M410.59999999999997 549.2L411.09999999999997 535.6c.9-.5 1.4 1 .3 2.4-1.3 1.5-2.9 2.6-2.9 4.6 0 1.6 1.2 2.6 2.4 2.5 1.3-.2 1.5-2.3.2-2.6-.9-.2-1.6.6-1.2 1.4" stroke="#111" stroke-width="0.85" fill="none"/>
<path d="M415.6 539.2V543.4000000000001c.8-.3 1.4-.8 1.4-1.4s-.9-.6-1.4 0" stroke="#111" stroke-width=".55" fill="none"/>
<path d="M417.8 536.1V540.3000000000001c.8-.3 1.4-.8 1.4-1.4s-.9-.6-1.4 0" stroke="#111" stroke-width=".55" fill="none"/>
<path d="M420.0 540.3V544.5c.8-.3 1.4-.8 1.4-1.4s-.9-.6-1.4 0" stroke="#111" stroke-width=".55" fill="none"/>
<text x="426.2" y="542.2" font-family="Liberation Sans" font-weight="bold" font-size="5.4" text-anchor="middle" fill="#000">3</text>
<text x="426.2" y="546.5" font-family="Liberation Sans" font-weight="bold" font-size="5.4" text-anchor="middle" fill="#000">4</text>
<rect x="408.7" y="559.4000000000001" width="1.5" height="9" fill="#111"/><path d="M410.9 559.4000000000001V568.4000000000001" stroke="#111" stroke-width=".5"/><path d="M411.4 563.9000000000001c1.5-.8 2-2.5 2.6-4M411.4 563.9000000000001c1.5.8 2 2.5 2.6 4" stroke="#111" stroke-width=".9" fill="none"/>
<path d="M415.6 560.9000000000001V565.1000000000001c.8-.3 1.4-.8 1.4-1.4s-.9-.6-1.4 0" stroke="#111" stroke-width=".55" fill="none"/>
<path d="M417.8 557.8000000000001V562.0000000000001c.8-.3 1.4-.8 1.4-1.4s-.9-.6-1.4 0" stroke="#111" stroke-width=".55" fill="none"/>
<path d="M420.0 562.0V566.2c.8-.3 1.4-.8 1.4-1.4s-.9-.6-1.4 0" stroke="#111" stroke-width=".55" fill="none"/>
<text x="426.2" y="563.9000000000001" font-family="Liberation Sans" font-weight="bold" font-size="5.4" text-anchor="middle" fill="#000">3</text>
<text x="426.2" y="568.2" font-family="Liberation Sans" font-weight="bold" font-size="5.4" text-anchor="middle" fill="#000">4</text>
<path d="M409.0 583.5c.8-2 3.8-1.8 3.5.8-.2 2-1.9 3.2-3.5 3.9" stroke="#111" stroke-width="1" fill="none"/><circle cx="409.3" cy="583.9" r=".8" fill="#111"/><circle cx="413.4" cy="582.9" r=".45" fill="#111"/><circle cx="413.4" cy="584.6" r=".45" fill="#111"/>
<path d="M415.6 582.8000000000001V587.0000000000001c.8-.3 1.4-.8 1.4-1.4s-.9-.6-1.4 0" stroke="#111" stroke-width=".55" fill="none"/>
<path d="M417.8 579.7V583.9000000000001c.8-.3 1.4-.8 1.4-1.4s-.9-.6-1.4 0" stroke="#111" stroke-width=".55" fill="none"/>
<path d="M420.0 583.9V588.1c.8-.3 1.4-.8 1.4-1.4s-.9-.6-1.4 0" stroke="#111" stroke-width=".55" fill="none"/>
<text x="426.2" y="585.8000000000001" font-family="Liberation Sans" font-weight="bold" font-size="5.4" text-anchor="middle" fill="#000">3</text>
<text x="426.2" y="590.1" font-family="Liberation Sans" font-weight="bold" font-size="5.4" text-anchor="middle" fill="#000">4</text>
<path d="M409.0 613.6999999999999c.8-2 3.8-1.8 3.5.8-.2 2-1.9 3.2-3.5 3.9" stroke="#111" stroke-width="1" fill="none"/><circle cx="409.3" cy="614.0999999999999" r=".8" fill="#111"/><circle cx="413.4" cy="613.0999999999999" r=".45" fill="#111"/><circle cx="413.4" cy="614.8" r=".45" fill="#111"/>
<path d="M415.6 613.0V617.2c.8-.3 1.4-.8 1.4-1.4s-.9-.6-1.4 0" stroke="#111" stroke-width=".55" fill="none"/>
<path d="M417.8 609.9V614.1c.8-.3 1.4-.8 1.4-1.4s-.9-.6-1.4 0" stroke="#111" stroke-width=".55" fill="none"/>
<path d="M420.0 614.0999999999999V618.3c.8-.3 1.4-.8 1.4-1.4s-.9-.6-1.4 0" stroke="#111" stroke-width=".55" fill="none"/>
<text x="426.2" y="616.0" font-family="Liberation Sans" font-weight="bold" font-size="5.4" text-anchor="middle" fill="#000">3</text>
<text x="426.2" y="620.3" font-family="Liberation Sans" font-weight="bold" font-size="5.4" text-anchor="middle" fill="#000">4</text>
<rect x="459.8" y="361.72" width="3.4" height="1.4" fill="#111"/>
<rect x="495.7" y="361.72" width="3.4" height="1.4" fill="#111"/>
<rect x="535.6999999999999" y="361.72" width="3.4" height="1.4" fill="#111"/>
<path d="M433.5 361.8l1.4 1.8-1.2 1.4 1.3 1.8" stroke="#111" stroke-width="1.1" fill="none"/>
<rect x="459.8" y="383.62" width="3.4" height="1.4" fill="#111"/>
<rect x="495.7" y="383.62" width="3.4" height="1.4" fill="#111"/>
<rect x="535.6999999999999" y="383.62" width="3.4" height="1.4" fill="#111"/>
<path d="M433.5 383.7l1.4 1.8-1.2 1.4 1.3 1.8" stroke="#111" stroke-width="1.1" fill="none"/>
<rect x="459.8" y="405.12" width="3.4" height="1.4" fill="#111"/>
<rect x="495.7" y="405.12" width="3.4" height="1.4" fill="#111"/>
<rect x="535.6999999999999" y="405.12" width="3.4" height="1.4" fill="#111"/>
<rect x="575.3" y="405.12" width="3.4" height="1.4" fill="#111"/>
<path d="M433.5 405.2l1.4 1.8-1.2 1.4 1.3 1.8" stroke="#111" stroke-width="1.1" fill="none"/>
<rect x="459.8" y="451.42" width="3.4" height="1.4" fill="#111"/>
<rect x="495.7" y="451.42" width="3.4" height="1.4" fill="#111"/>
<rect x="535.6999999999999" y="451.42" width="3.4" height="1.4" fill="#111"/>
<rect x="575.3" y="451.42" width="3.4" height="1.4" fill="#111"/>
<path d="M433.5 451.5l1.4 1.8-1.2 1.4 1.3 1.8" stroke="#111" stroke-width="1.1" fill="none"/>
<rect x="459.8" y="473.62" width="3.4" height="1.4" fill="#111"/>
<rect x="495.7" y="473.62" width="3.4" height="1.4" fill="#111"/>
<rect x="535.6999999999999" y="473.62" width="3.4" height="1.4" fill="#111"/>
<rect x="575.3" y="473.62" width="3.4" height="1.4" fill="#111"/>
<path d="M433.5 473.7l1.4 1.8-1.2 1.4 1.3 1.8" stroke="#111" stroke-width="1.1" fill="none"/>
<rect x="459.8" y="495.52" width="3.4" height="1.4" fill="#111"/>
<rect x="495.7" y="495.52" width="3.4" height="1.4" fill="#111"/>
<rect x="535.6999999999999" y="495.52" width="3.4" height="1.4" fill="#111"/>
<rect x="575.3" y="495.52" width="3.4" height="1.4" fill="#111"/>
<path d="M433.5 495.59999999999997l1.4 1.8-1.2 1.4 1.3 1.8" stroke="#111" stroke-width="1.1" fill="none"/>
<rect x="459.8" y="517.32" width="3.4" height="1.4" fill="#111"/>
<rect x="495.7" y="517.32" width="3.4" height="1.4" fill="#111"/>
<rect x="535.6999999999999" y="517.32" width="3.4" height="1.4" fill="#111"/>
<rect x="575.3" y="517.32" width="3.4" height="1.4" fill="#111"/>
<path d="M433.5 517.4000000000001l1.4 1.8-1.2 1.4 1.3 1.8" stroke="#111" stroke-width="1.1" fill="none"/>
<rect x="459.8" y="540.12" width="3.4" height="1.4" fill="#111"/>
<rect x="495.7" y="540.12" width="3.4" height="1.4" fill="#111"/>
<rect x="535.6999999999999" y="540.12" width="3.4" height="1.4" fill="#111"/>
<rect x="575.3" y="540.12" width="3.4" height="1.4" fill="#111"/>
<path d="M433.5 540.2l1.4 1.8-1.2 1.4 1.3 1.8" stroke="#111" stroke-width="1.1" fill="none"/>
<rect x="459.8" y="561.82" width="3.4" height="1.4" fill="#111"/>
<rect x="495.7" y="561.82" width="3.4" height="1.4" fill="#111"/>
<rect x="535.6999999999999" y="561.82" width="3.4" height="1.4" fill="#111"/>
<rect x="575.3" y="561.82" width="3.4" height="1.4" fill="#111"/>
<path d="M433.5 561.9000000000001l1.4 1.8-1.2 1.4 1.3 1.8" stroke="#111" stroke-width="1.1" fill="none"/>
<ellipse cx="438.7" cy="333.9" rx="1.75" ry="1.25" fill="#000" transform="rotate(-20 438.7 333.9)"/><path d="M437.25 333.9V339.9" stroke="#111" stroke-width=".6"/>
<ellipse cx="438.7" cy="337.6" rx="1.75" ry="1.25" fill="#000" transform="rotate(-20 438.7 337.6)"/><path d="M437.25 337.6V343.6" stroke="#111" stroke-width=".6"/>
<ellipse cx="447.5" cy="334" rx="1.75" ry="1.25" fill="#000" transform="rotate(-20 447.5 334)"/><path d="M446.05 334V340" stroke="#111" stroke-width=".6"/>
<ellipse cx="447.5" cy="337.5" rx="1.75" ry="1.25" fill="#000" transform="rotate(-20 447.5 337.5)"/><path d="M446.05 337.5V343.5" stroke="#111" stroke-width=".6"/>
<ellipse cx="457.5" cy="334" rx="1.75" ry="1.25" fill="#000" transform="rotate(-20 457.5 334)"/><path d="M456.05 334V340" stroke="#111" stroke-width=".6"/>
<ellipse cx="457.5" cy="337.5" rx="1.75" ry="1.25" fill="#000" transform="rotate(-20 457.5 337.5)"/><path d="M456.05 337.5V343.5" stroke="#111" stroke-width=".6"/>
<ellipse cx="463" cy="336" rx="1.75" ry="1.25" fill="#000" transform="rotate(-20 463 336)"/><path d="M461.55 336V342" stroke="#111" stroke-width=".6"/>
<ellipse cx="475" cy="336" rx="1.75" ry="1.25" fill="#000" transform="rotate(-20 475 336)"/><path d="M473.55 336V342" stroke="#111" stroke-width=".6"/>
<ellipse cx="475" cy="338" rx="1.75" ry="1.25" fill="#000" transform="rotate(-20 475 338)"/><path d="M473.55 338V344" stroke="#111" stroke-width=".6"/>
<ellipse cx="484.5" cy="336" rx="1.75" ry="1.25" fill="#000" transform="rotate(-20 484.5 336)"/><path d="M483.05 336V342" stroke="#111" stroke-width=".6"/>
<ellipse cx="493" cy="330.5" rx="1.75" ry="1.25" fill="#000" transform="rotate(-20 493 330.5)"/><path d="M491.55 330.5V336.5" stroke="#111" stroke-width=".6"/>
<ellipse cx="493" cy="333.5" rx="1.75" ry="1.25" fill="#000" transform="rotate(-20 493 333.5)"/><path d="M491.55 333.5V339.5" stroke="#111" stroke-width=".6"/>
<ellipse cx="510" cy="340" rx="1.75" ry="1.25" fill="#000" transform="rotate(-20 510 340)"/><path d="M508.55 340V346" stroke="#111" stroke-width=".6"/>
<ellipse cx="499" cy="341" rx="1.75" ry="1.25" fill="#000" transform="rotate(-20 499 341)"/><path d="M500.45 341V333" stroke="#111" stroke-width=".6"/>
<ellipse cx="499" cy="347.6" rx="1.75" ry="1.25" fill="#000" transform="rotate(-20 499 347.6)"/><path d="M500.45 347.6V339.6" stroke="#111" stroke-width=".6"/>
<ellipse cx="519.5" cy="332.5" rx="1.75" ry="1.25" fill="#000" transform="rotate(-20 519.5 332.5)"/><path d="M518.05 332.5V338.5" stroke="#111" stroke-width=".6"/>
<ellipse cx="519.5" cy="335.5" rx="1.75" ry="1.25" fill="#000" transform="rotate(-20 519.5 335.5)"/><path d="M518.05 335.5V341.5" stroke="#111" stroke-width=".6"/>
<ellipse cx="533" cy="333" rx="1.75" ry="1.25" fill="#000" transform="rotate(-20 533 333)"/><path d="M531.55 333V339" stroke="#111" stroke-width=".6"/>
<ellipse cx="533" cy="337" rx="1.75" ry="1.25" fill="#000" transform="rotate(-20 533 337)"/><path d="M531.55 337V343" stroke="#111" stroke-width=".6"/>
<ellipse cx="540" cy="336" rx="1.75" ry="1.25" fill="#000" transform="rotate(-20 540 336)"/><path d="M538.55 336V342" stroke="#111" stroke-width=".6"/>
<ellipse cx="540" cy="344" rx="1.75" ry="1.25" fill="#000" transform="rotate(-20 540 344)"/><path d="M538.55 344V350" stroke="#111" stroke-width=".6"/>
<ellipse cx="547" cy="340" rx="1.75" ry="1.25" fill="#000" transform="rotate(-20 547 340)"/><path d="M545.55 340V346" stroke="#111" stroke-width=".6"/>
<ellipse cx="547" cy="347.6" rx="1.75" ry="1.25" fill="#000" transform="rotate(-20 547 347.6)"/><path d="M545.55 347.6V353.6" stroke="#111" stroke-width=".6"/>
<ellipse cx="553" cy="336" rx="1.75" ry="1.25" fill="#000" transform="rotate(-20 553 336)"/><path d="M551.55 336V342" stroke="#111" stroke-width=".6"/>
<ellipse cx="564.5" cy="335" rx="1.75" ry="1.25" fill="#000" transform="rotate(-20 564.5 335)"/><path d="M563.05 335V341" stroke="#111" stroke-width=".6"/>
<ellipse cx="576" cy="335" rx="1.75" ry="1.25" fill="#000" transform="rotate(-20 576 335)"/><path d="M574.55 335V341" stroke="#111" stroke-width=".6"/>
<path d="M532 347l6 2" stroke="#111" stroke-width="1"/><path d="M547 334l6-2" stroke="#111" stroke-width="1"/>
<path d="M565 333q5.5-2 11 0" stroke="#222" stroke-width=".6" fill="none"/>
<path d="M587.5 339.5l1.3 1-1 2" stroke="#444" stroke-width=".6" fill="none"/>
<text x="424" y="332.5" font-family="Liberation Serif" font-weight="bold" font-size="5" fill="#111">♩= 90</text>
<text x="434.5" y="354" font-family="Liberation Serif" font-style="italic" font-weight="bold" font-size="4.8" fill="#111">mp</text>
<path d="M447 353L460 351.8M447 353L460 354.2" stroke="#888" stroke-width=".6"/>
<path d="M483 353L497 351.8M483 353L497 354.2" stroke="#888" stroke-width=".6"/>
<path d="M517 353L545 351.8M517 353L545 354.2" stroke="#888" stroke-width=".6"/>
<path d="M563 353L585 351.8M563 353L585 354.2" stroke="#888" stroke-width=".6"/>
<path d="M563 362.1l1 2-1 2 1 2" stroke="#222" stroke-width=".8" fill="none"/>
<path d="M570 362.6l1.3 1-1 2" stroke="#444" stroke-width=".6" fill="none"/>
<path d="M575 362.6l1.3 1-1 2" stroke="#444" stroke-width=".6" fill="none"/>
<path d="M579 362.6l1.3 1-1 2" stroke="#444" stroke-width=".6" fill="none"/>
<ellipse cx="583" cy="368.1" rx="1.75" ry="1.25" fill="#000" transform="rotate(-20 583 368.1)"/><path d="M584.45 368.1V361.1" stroke="#111" stroke-width=".6"/>
<text x="580" y="375.6" font-family="Liberation Serif" font-style="italic" font-weight="bold" font-size="5" fill="#111">mf</text>
<path d="M563 384.0l1 2-1 2 1 2" stroke="#222" stroke-width=".8" fill="none"/>
<path d="M570 384.5l1.3 1-1 2" stroke="#444" stroke-width=".6" fill="none"/>
<path d="M575 384.5l1.3 1-1 2" stroke="#444" stroke-width=".6" fill="none"/>
<path d="M579 384.5l1.3 1-1 2" stroke="#444" stroke-width=".6" fill="none"/>
<ellipse cx="583" cy="390.0" rx="1.75" ry="1.25" fill="#000" transform="rotate(-20 583 390.0)"/><path d="M584.45 390.0V383.0" stroke="#111" stroke-width=".6"/>
<text x="580" y="397.5" font-family="Liberation Serif" font-style="italic" font-weight="bold" font-size="5" fill="#111">mf</text>
<rect x="575.3" y="405.12" width="3.4" height="1.4" fill="#111"/>
<text x="451.5" y="421.5" font-family="Liberation Serif" font-size="5" text-anchor="middle" fill="#111">Mib</text>
<text x="487.5" y="421.5" font-family="Liberation Serif" font-size="5" text-anchor="middle" fill="#111">Asus</text>
<text x="523" y="421.5" font-family="Liberation Serif" font-size="5" text-anchor="middle" fill="#111">Cm</text>
<text x="549.5" y="421.5" font-family="Liberation Serif" font-size="5" text-anchor="middle" fill="#111">C#7</text>
<text x="567" y="421.5" font-family="Liberation Serif" font-size="5" text-anchor="middle" fill="#111">Cm</text>
<ellipse cx="434.5" cy="437.7" rx="1.75" ry="1.25" fill="#000" transform="rotate(-20 434.5 437.7)"/><path d="M435.95 437.7V430.2" stroke="#111" stroke-width=".6"/>
<ellipse cx="448" cy="437.5" rx="1.75" ry="1.25" fill="#000" transform="rotate(-20 448 437.5)"/><path d="M449.45 437.5V430.0" stroke="#111" stroke-width=".6"/>
<ellipse cx="458" cy="438.5" rx="1.75" ry="1.25" fill="#000" transform="rotate(-20 458 438.5)"/><path d="M459.45 438.5V431.0" stroke="#111" stroke-width=".6"/>
<ellipse cx="469" cy="437.5" rx="1.75" ry="1.25" fill="#000" transform="rotate(-20 469 437.5)"/><path d="M470.45 437.5V430.0" stroke="#111" stroke-width=".6"/>
<ellipse cx="475" cy="438.0" rx="1.75" ry="1.25" fill="#000" transform="rotate(-20 475 438.0)"/><path d="M476.45 438.0V430.5" stroke="#111" stroke-width=".6"/>
<ellipse cx="484" cy="440.0" rx="1.75" ry="1.25" fill="#000" transform="rotate(-20 484 440.0)"/><path d="M485.45 440.0V432.5" stroke="#111" stroke-width=".6"/>
<ellipse cx="494" cy="441.0" rx="1.75" ry="1.25" fill="#000" transform="rotate(-20 494 441.0)"/><path d="M495.45 441.0V433.5" stroke="#111" stroke-width=".6"/>
<ellipse cx="504" cy="438.0" rx="1.75" ry="1.25" fill="#000" transform="rotate(-20 504 438.0)"/><path d="M505.45 438.0V430.5" stroke="#111" stroke-width=".6"/>
<ellipse cx="510" cy="436.0" rx="1.75" ry="1.25" fill="#000" transform="rotate(-20 510 436.0)"/><path d="M511.45 436.0V428.5" stroke="#111" stroke-width=".6"/>
<ellipse cx="519" cy="440.0" rx="1.75" ry="1.25" fill="#000" transform="rotate(-20 519 440.0)"/><path d="M520.45 440.0V432.5" stroke="#111" stroke-width=".6"/>
<ellipse cx="526" cy="440.0" rx="1.75" ry="1.25" fill="#000" transform="rotate(-20 526 440.0)"/><path d="M527.45 440.0V432.5" stroke="#111" stroke-width=".6"/>
<ellipse cx="533" cy="440.0" rx="1.75" ry="1.25" fill="#000" transform="rotate(-20 533 440.0)"/><path d="M534.45 440.0V432.5" stroke="#111" stroke-width=".6"/>
<ellipse cx="540" cy="437.5" rx="1.75" ry="1.25" fill="#000" transform="rotate(-20 540 437.5)"/><path d="M541.45 437.5V430.0" stroke="#111" stroke-width=".6"/>
<ellipse cx="548" cy="433.0" rx="1.75" ry="1.25" fill="#000" transform="rotate(-20 548 433.0)"/><path d="M549.45 433.0V425.5" stroke="#111" stroke-width=".6"/>
<ellipse cx="554" cy="435.0" rx="1.75" ry="1.25" fill="#000" transform="rotate(-20 554 435.0)"/><path d="M555.45 435.0V427.5" stroke="#111" stroke-width=".6"/>
<ellipse cx="564" cy="436.5" rx="1.75" ry="1.25" fill="#000" transform="rotate(-20 564 436.5)"/><path d="M565.45 436.5V429.0" stroke="#111" stroke-width=".6"/>
<path d="M470.4 430.0H476.4M505.4 429.4H511.4M520.4 431.4H527.4M534.4 430.9H541.4M549.4 424.9H555.4" stroke="#111" stroke-width="1"/>
<path d="M494 442.4q5 2 10 0" stroke="#333" stroke-width=".5" fill="none"/>
<text x="431" y="442.9" font-family="Liberation Serif" font-style="italic" font-weight="bold" font-size="4.5" fill="#222">mp</text>
<path d="M482 445.9L500 445.4M517 445.4L545 445.4" stroke="#999" stroke-width=".7"/>
<text x="545" y="446.9" font-family="Liberation Serif" font-style="italic" font-weight="bold" font-size="4.5" fill="#222">mf</text>
<path d="M581 428.4l1 2-1 2 1 2" stroke="#222" stroke-width=".8" fill="none"/>
<rect x="574.3" y="451.42" width="3.4" height="1.4" fill="#111"/>
<ellipse cx="583" cy="482.5" rx="1.75" ry="1.25" fill="#000" transform="rotate(-20 583 482.5)"/><path d="M584.45 482.5V475.5" stroke="#111" stroke-width=".6"/>
<text x="580" y="487.0" font-family="Liberation Serif" font-style="italic" font-weight="bold" font-size="4.5" fill="#222">mf</text>
<rect x="565.3" y="473.62" width="3.4" height="1.4" fill="#111"/>
<ellipse cx="438.5" cy="579.0" rx="1.75" ry="1.25" fill="#000" transform="rotate(-20 438.5 579.0)"/><path d="M437.05 579.0V585.0" stroke="#111" stroke-width=".6"/>
<ellipse cx="438.5" cy="583.0" rx="1.75" ry="1.25" fill="#000" transform="rotate(-20 438.5 583.0)"/><path d="M437.05 583.0V589.0" stroke="#111" stroke-width=".6"/>
<ellipse cx="448" cy="586.0" rx="1.75" ry="1.25" fill="#000" transform="rotate(-20 448 586.0)"/><path d="M446.55 586.0V592.0" stroke="#111" stroke-width=".6"/>
<ellipse cx="457.5" cy="579.0" rx="1.75" ry="1.25" fill="#000" transform="rotate(-20 457.5 579.0)"/><path d="M456.05 579.0V585.0" stroke="#111" stroke-width=".6"/>
<ellipse cx="457.5" cy="582.0" rx="1.75" ry="1.25" fill="#000" transform="rotate(-20 457.5 582.0)"/><path d="M456.05 582.0V588.0" stroke="#111" stroke-width=".6"/>
<ellipse cx="463" cy="579.0" rx="1.75" ry="1.25" fill="#000" transform="rotate(-20 463 579.0)"/><path d="M461.55 579.0V585.0" stroke="#111" stroke-width=".6"/>
<ellipse cx="463" cy="582.0" rx="1.75" ry="1.25" fill="#000" transform="rotate(-20 463 582.0)"/><path d="M461.55 582.0V588.0" stroke="#111" stroke-width=".6"/>
<ellipse cx="474.5" cy="580.0" rx="1.75" ry="1.25" fill="#000" transform="rotate(-20 474.5 580.0)"/><path d="M473.05 580.0V586.0" stroke="#111" stroke-width=".6"/>
<ellipse cx="474.5" cy="584.0" rx="1.75" ry="1.25" fill="#000" transform="rotate(-20 474.5 584.0)"/><path d="M473.05 584.0V590.0" stroke="#111" stroke-width=".6"/>
<ellipse cx="484.5" cy="579.0" rx="1.75" ry="1.25" fill="#000" transform="rotate(-20 484.5 579.0)"/><path d="M483.05 579.0V585.0" stroke="#111" stroke-width=".6"/>
<ellipse cx="493" cy="582.0" rx="1.75" ry="1.25" fill="#000" transform="rotate(-20 493 582.0)"/><path d="M491.55 582.0V588.0" stroke="#111" stroke-width=".6"/>
<ellipse cx="493" cy="585.0" rx="1.75" ry="1.25" fill="#000" transform="rotate(-20 493 585.0)"/><path d="M491.55 585.0V591.0" stroke="#111" stroke-width=".6"/>
<ellipse cx="499" cy="586.0" rx="1.75" ry="1.25" fill="#000" transform="rotate(-20 499 586.0)"/><path d="M497.55 586.0V592.0" stroke="#111" stroke-width=".6"/>
<ellipse cx="510" cy="579.0" rx="1.75" ry="1.25" fill="#000" transform="rotate(-20 510 579.0)"/><path d="M508.55 579.0V585.0" stroke="#111" stroke-width=".6"/>
<ellipse cx="510" cy="583.0" rx="1.75" ry="1.25" fill="#000" transform="rotate(-20 510 583.0)"/><path d="M508.55 583.0V589.0" stroke="#111" stroke-width=".6"/>
<ellipse cx="540" cy="583.0" rx="1.75" ry="1.25" fill="#000" transform="rotate(-20 540 583.0)"/><path d="M538.55 583.0V589.0" stroke="#111" stroke-width=".6"/>
<ellipse cx="540" cy="586.0" rx="1.75" ry="1.25" fill="#000" transform="rotate(-20 540 586.0)"/><path d="M538.55 586.0V592.0" stroke="#111" stroke-width=".6"/>
<ellipse cx="546.5" cy="586.0" rx="1.75" ry="1.25" fill="#000" transform="rotate(-20 546.5 586.0)"/><path d="M545.05 586.0V592.0" stroke="#111" stroke-width=".6"/>
<ellipse cx="553" cy="583.0" rx="1.75" ry="1.25" fill="#000" transform="rotate(-20 553 583.0)"/><path d="M551.55 583.0V589.0" stroke="#111" stroke-width=".6"/>
<ellipse cx="564" cy="583.0" rx="1.75" ry="1.25" fill="#000" transform="rotate(-20 564 583.0)"/><path d="M562.55 583.0V589.0" stroke="#111" stroke-width=".6"/>
<ellipse cx="576" cy="583.0" rx="1.75" ry="1.25" fill="#000" transform="rotate(-20 576 583.0)"/><path d="M574.55 583.0V589.0" stroke="#111" stroke-width=".6"/>
<path d="M434 584.6l1.3 1-1 2" stroke="#333" stroke-width=".7" fill="none"/>
<path d="M532 584.6l1.3 1-1 2" stroke="#333" stroke-width=".7" fill="none"/>
<path d="M588 584.6l1.3 1-1 2" stroke="#333" stroke-width=".7" fill="none"/>
<path d="M518.5 584.6v4" stroke="#222" stroke-width="1.3"/>
<path d="M545 592.6l7-2" stroke="#111" stroke-width="1"/>
<path d="M564 580.6q6-2 12 0" stroke="#222" stroke-width=".6" fill="none"/>
<text x="435" y="599.6" font-family="Liberation Serif" font-style="italic" font-weight="bold" font-size="4.8" fill="#111">mp</text>
<path d="M447 598.2L460 597.8000000000001M473.5 598.2L493 597.4L513 598.2M520 598.2L545 597.6M560 597.6L585 598.2" stroke="#999" stroke-width=".8" fill="none"/>
<ellipse cx="438.5" cy="604.5" rx="1.75" ry="1.25" fill="#000" transform="rotate(-20 438.5 604.5)"/><path d="M437.05 604.5V611.5" stroke="#111" stroke-width=".6"/>
<ellipse cx="438.5" cy="607.0" rx="1.75" ry="1.25" fill="#000" transform="rotate(-20 438.5 607.0)"/><path d="M437.05 607.0V614.0" stroke="#111" stroke-width=".6"/>
<ellipse cx="438.5" cy="610.0" rx="1.75" ry="1.25" fill="#000" transform="rotate(-20 438.5 610.0)"/><path d="M437.05 610.0V617.0" stroke="#111" stroke-width=".6"/>
<ellipse cx="447.5" cy="604.0" rx="1.75" ry="1.25" fill="#000" transform="rotate(-20 447.5 604.0)"/><path d="M446.05 604.0V611.0" stroke="#111" stroke-width=".6"/>
<ellipse cx="447.5" cy="608.0" rx="1.75" ry="1.25" fill="#000" transform="rotate(-20 447.5 608.0)"/><path d="M446.05 608.0V615.0" stroke="#111" stroke-width=".6"/>
<ellipse cx="457.5" cy="604.5" rx="1.75" ry="1.25" fill="#000" transform="rotate(-20 457.5 604.5)"/><path d="M456.05 604.5V611.5" stroke="#111" stroke-width=".6"/>
<ellipse cx="457.5" cy="608.0" rx="1.75" ry="1.25" fill="#000" transform="rotate(-20 457.5 608.0)"/><path d="M456.05 608.0V615.0" stroke="#111" stroke-width=".6"/>
<ellipse cx="463" cy="607.0" rx="1.75" ry="1.25" fill="#000" transform="rotate(-20 463 607.0)"/><path d="M461.55 607.0V614.0" stroke="#111" stroke-width=".6"/>
<ellipse cx="474.5" cy="607.0" rx="1.75" ry="1.25" fill="#000" transform="rotate(-20 474.5 607.0)"/><path d="M473.05 607.0V614.0" stroke="#111" stroke-width=".6"/>
<ellipse cx="474.5" cy="610.0" rx="1.75" ry="1.25" fill="#000" transform="rotate(-20 474.5 610.0)"/><path d="M473.05 610.0V617.0" stroke="#111" stroke-width=".6"/>
<ellipse cx="484" cy="607.0" rx="1.75" ry="1.25" fill="#000" transform="rotate(-20 484 607.0)"/><path d="M482.55 607.0V614.0" stroke="#111" stroke-width=".6"/>
<ellipse cx="493" cy="603.0" rx="1.75" ry="1.25" fill="#000" transform="rotate(-20 493 603.0)"/><path d="M491.55 603.0V610.0" stroke="#111" stroke-width=".6"/>
<ellipse cx="493" cy="606.0" rx="1.75" ry="1.25" fill="#000" transform="rotate(-20 493 606.0)"/><path d="M491.55 606.0V613.0" stroke="#111" stroke-width=".6"/>
<ellipse cx="493" cy="609.0" rx="1.75" ry="1.25" fill="#000" transform="rotate(-20 493 609.0)"/><path d="M491.55 609.0V616.0" stroke="#111" stroke-width=".6"/>
<ellipse cx="510" cy="610.0" rx="1.75" ry="1.25" fill="#000" transform="rotate(-20 510 610.0)"/><path d="M508.55 610.0V617.0" stroke="#111" stroke-width=".6"/>
<ellipse cx="519" cy="602.0" rx="1.75" ry="1.25" fill="#000" transform="rotate(-20 519 602.0)"/><path d="M517.55 602.0V609.0" stroke="#111" stroke-width=".6"/>
<ellipse cx="519" cy="606.0" rx="1.75" ry="1.25" fill="#000" transform="rotate(-20 519 606.0)"/><path d="M517.55 606.0V613.0" stroke="#111" stroke-width=".6"/>
<ellipse cx="532" cy="606.0" rx="1.75" ry="1.25" fill="#000" transform="rotate(-20 532 606.0)"/><path d="M530.55 606.0V613.0" stroke="#111" stroke-width=".6"/>
<ellipse cx="532" cy="609.0" rx="1.75" ry="1.25" fill="#000" transform="rotate(-20 532 609.0)"/><path d="M530.55 609.0V616.0" stroke="#111" stroke-width=".6"/>
<ellipse cx="499" cy="612.0" rx="1.75" ry="1.25" fill="#000" transform="rotate(-20 499 612.0)"/><path d="M500.45 612.0V604.0" stroke="#111" stroke-width=".6"/>
<ellipse cx="499" cy="617.0" rx="1.75" ry="1.25" fill="#000" transform="rotate(-20 499 617.0)"/><path d="M500.45 617.0V609.0" stroke="#111" stroke-width=".6"/>
<ellipse cx="540" cy="609.0" rx="1.75" ry="1.25" fill="#000" transform="rotate(-20 540 609.0)"/><path d="M541.45 609.0V601.0" stroke="#111" stroke-width=".6"/>
<ellipse cx="540" cy="613.0" rx="1.75" ry="1.25" fill="#000" transform="rotate(-20 540 613.0)"/><path d="M541.45 613.0V605.0" stroke="#111" stroke-width=".6"/>
<ellipse cx="547" cy="611.0" rx="1.75" ry="1.25" fill="#000" transform="rotate(-20 547 611.0)"/><path d="M548.45 611.0V603.0" stroke="#111" stroke-width=".6"/>
<ellipse cx="547" cy="617.0" rx="1.75" ry="1.25" fill="#000" transform="rotate(-20 547 617.0)"/><path d="M548.45 617.0V609.0" stroke="#111" stroke-width=".6"/>
<ellipse cx="553" cy="607.0" rx="1.75" ry="1.25" fill="#000" transform="rotate(-20 553 607.0)"/><path d="M554.45 607.0V599.0" stroke="#111" stroke-width=".6"/>
<ellipse cx="564" cy="606.0" rx="1.75" ry="1.25" fill="#000" transform="rotate(-20 564 606.0)"/><path d="M562.55 606.0V613.0" stroke="#111" stroke-width=".6"/>
<ellipse cx="576" cy="606.0" rx="1.75" ry="1.25" fill="#000" transform="rotate(-20 576 606.0)"/><path d="M574.55 606.0V613.0" stroke="#111" stroke-width=".6"/>
<path d="M531 616.8l7 2.5M547 619.8l6-3" stroke="#111" stroke-width="1"/>
<path d="M564 603.8q6-2 12 0" stroke="#222" stroke-width=".6" fill="none"/>
<path d="M434 615.8l1.3 1-1 2" stroke="#333" stroke-width=".7" fill="none"/>
<path d="M588 615.8l1.3 1-1 2" stroke="#333" stroke-width=".7" fill="none"/>
<text x="435" y="628.8" font-family="Liberation Serif" font-style="italic" font-weight="bold" font-size="4.8" fill="#111">mp</text>
<path d="M447 627.5L460 627.0999999999999M473 627.5L492 626.6999999999999L510 627.5L527 626.6999999999999L545 627.5M573 627.0999999999999L585 627.5" stroke="#999" stroke-width=".8" fill="none"/>
<text x="366.5" y="642" font-family="Liberation Serif" font-size="4" fill="#555">2</text>
<path d="M641 337.00H674M641 339.12H674M641 341.24H674M641 343.36H674M641 345.48H674" stroke="#8a8a8a" stroke-width="0.45" fill="none"/>
<path d="M646.9 348.2c-.9.3-1.6-.3-1-1M646.9 348.2L647.4 334.6c.9-.5 1.4 1 .3 2.4-1.3 1.5-2.9 2.6-2.9 4.6 0 1.6 1.2 2.6 2.4 2.5 1.3-.2 1.5-2.3.2-2.6-.9-.2-1.6.6-1.2 1.4" stroke="#111" stroke-width="0.85" fill="none"/>
<path d="M652.0 338.2V342.4c.8-.3 1.4-.8 1.4-1.4s-.9-.6-1.4 0" stroke="#111" stroke-width=".55" fill="none"/>
<path d="M654.2 335.1V339.3c.8-.3 1.4-.8 1.4-1.4s-.9-.6-1.4 0" stroke="#111" stroke-width=".55" fill="none"/>
<path d="M656.4 339.3V343.5c.8-.3 1.4-.8 1.4-1.4s-.9-.6-1.4 0" stroke="#111" stroke-width=".55" fill="none"/>
<text x="633" y="343" font-family="Liberation Serif" font-size="5" text-anchor="end" fill="#1a1a1a">Fl.</text>
<path d="M641 359.20H674M641 361.32H674M641 363.44H674M641 365.56H674M641 367.68H674" stroke="#8a8a8a" stroke-width="0.45" fill="none"/>
<path d="M646.9 370.4c-.9.3-1.6-.3-1-1M646.9 370.4L647.4 356.8c.9-.5 1.4 1 .3 2.4-1.3 1.5-2.9 2.6-2.9 4.6 0 1.6 1.2 2.6 2.4 2.5 1.3-.2 1.5-2.3.2-2.6-.9-.2-1.6.6-1.2 1.4" stroke="#111" stroke-width="0.85" fill="none"/>
<path d="M652.0 360.4V364.59999999999997c.8-.3 1.4-.8 1.4-1.4s-.9-.6-1.4 0" stroke="#111" stroke-width=".55" fill="none"/>
<path d="M654.2 357.3V361.5c.8-.3 1.4-.8 1.4-1.4s-.9-.6-1.4 0" stroke="#111" stroke-width=".55" fill="none"/>
<path d="M656.4 361.5V365.7c.8-.3 1.4-.8 1.4-1.4s-.9-.6-1.4 0" stroke="#111" stroke-width=".55" fill="none"/>
<text x="633" y="365.2" font-family="Liberation Serif" font-size="5" text-anchor="end" fill="#1a1a1a">Ob.</text>
<path d="M641 381.50H674M641 383.62H674M641 385.74H674M641 387.86H674M641 389.98H674" stroke="#8a8a8a" stroke-width="0.45" fill="none"/>
<path d="M646.9 392.7c-.9.3-1.6-.3-1-1M646.9 392.7L647.4 379.1c.9-.5 1.4 1 .3 2.4-1.3 1.5-2.9 2.6-2.9 4.6 0 1.6 1.2 2.6 2.4 2.5 1.3-.2 1.5-2.3.2-2.6-.9-.2-1.6.6-1.2 1.4" stroke="#111" stroke-width="0.85" fill="none"/>
<path d="M652.0 382.7V386.9c.8-.3 1.4-.8 1.4-1.4s-.9-.6-1.4 0" stroke="#111" stroke-width=".55" fill="none"/>
<text x="633" y="387.5" font-family="Liberation Serif" font-size="5" text-anchor="end" fill="#1a1a1a">B♭ Cl.</text>
<path d="M641 403.60H674M641 405.72H674M641 407.84H674M641 409.96H674M641 412.08H674" stroke="#8a8a8a" stroke-width="0.45" fill="none"/>
<path d="M645.3 405.5c.8-2 3.8-1.8 3.5.8-.2 2-1.9 3.2-3.5 3.9" stroke="#111" stroke-width="1" fill="none"/><circle cx="645.6" cy="405.90000000000003" r=".8" fill="#111"/><circle cx="649.7" cy="404.90000000000003" r=".45" fill="#111"/><circle cx="649.7" cy="406.6" r=".45" fill="#111"/>
<path d="M652.0 404.8V409.0c.8-.3 1.4-.8 1.4-1.4s-.9-.6-1.4 0" stroke="#111" stroke-width=".55" fill="none"/>
<path d="M654.2 401.70000000000005V405.90000000000003c.8-.3 1.4-.8 1.4-1.4s-.9-.6-1.4 0" stroke="#111" stroke-width=".55" fill="none"/>
<path d="M656.4 405.90000000000003V410.1c.8-.3 1.4-.8 1.4-1.4s-.9-.6-1.4 0" stroke="#111" stroke-width=".55" fill="none"/>
<text x="633" y="409.6" font-family="Liberation Serif" font-size="5" text-anchor="end" fill="#1a1a1a">Bsn.</text>
<path d="M641 426.40H674M641 428.52H674M641 430.64H674M641 432.76H674M641 434.88H674" stroke="#8a8a8a" stroke-width="0.45" fill="none"/>
<path d="M646.9 437.59999999999997c-.9.3-1.6-.3-1-1M646.9 437.59999999999997L647.4 424.0c.9-.5 1.4 1 .3 2.4-1.3 1.5-2.9 2.6-2.9 4.6 0 1.6 1.2 2.6 2.4 2.5 1.3-.2 1.5-2.3.2-2.6-.9-.2-1.6.6-1.2 1.4" stroke="#111" stroke-width="0.85" fill="none"/>
<path d="M652.0 427.59999999999997V431.79999999999995c.8-.3 1.4-.8 1.4-1.4s-.9-.6-1.4 0" stroke="#111" stroke-width=".55" fill="none"/>
<text x="633" y="432.4" font-family="Liberation Serif" font-size="5" text-anchor="end" fill="#1a1a1a">F Hn.</text>
<path d="M641 449.30H674M641 451.42H674M641 453.54H674M641 455.66H674M641 457.78H674" stroke="#8a8a8a" stroke-width="0.45" fill="none"/>
<path d="M646.9 460.5c-.9.3-1.6-.3-1-1M646.9 460.5L647.4 446.90000000000003c.9-.5 1.4 1 .3 2.4-1.3 1.5-2.9 2.6-2.9 4.6 0 1.6 1.2 2.6 2.4 2.5 1.3-.2 1.5-2.3.2-2.6-.9-.2-1.6.6-1.2 1.4" stroke="#111" stroke-width="0.85" fill="none"/>
<path d="M652.0 450.5V454.7c.8-.3 1.4-.8 1.4-1.4s-.9-.6-1.4 0" stroke="#111" stroke-width=".55" fill="none"/>
<path d="M641 471.50H674M641 473.62H674M641 475.74H674M641 477.86H674M641 479.98H674" stroke="#8a8a8a" stroke-width="0.45" fill="none"/>
<path d="M646.9 482.7c-.9.3-1.6-.3-1-1M646.9 482.7L647.4 469.1c.9-.5 1.4 1 .3 2.4-1.3 1.5-2.9 2.6-2.9 4.6 0 1.6 1.2 2.6 2.4 2.5 1.3-.2 1.5-2.3.2-2.6-.9-.2-1.6.6-1.2 1.4" stroke="#111" stroke-width="0.85" fill="none"/>
<path d="M652.0 472.7V476.9c.8-.3 1.4-.8 1.4-1.4s-.9-.6-1.4 0" stroke="#111" stroke-width=".55" fill="none"/>
<text x="633" y="477.5" font-family="Liberation Serif" font-size="5" text-anchor="end" fill="#1a1a1a">B♭ Tpt.</text>
<path d="M641 493.40H674M641 495.52H674M641 497.64H674M641 499.76H674M641 501.88H674" stroke="#8a8a8a" stroke-width="0.45" fill="none"/>
<path d="M645.3 495.29999999999995c.8-2 3.8-1.8 3.5.8-.2 2-1.9 3.2-3.5 3.9" stroke="#111" stroke-width="1" fill="none"/><circle cx="645.6" cy="495.7" r=".8" fill="#111"/><circle cx="649.7" cy="494.7" r=".45" fill="#111"/><circle cx="649.7" cy="496.4" r=".45" fill="#111"/>
<path d="M652.0 494.59999999999997V498.79999999999995c.8-.3 1.4-.8 1.4-1.4s-.9-.6-1.4 0" stroke="#111" stroke-width=".55" fill="none"/>
<path d="M654.2 491.5V495.7c.8-.3 1.4-.8 1.4-1.4s-.9-.6-1.4 0" stroke="#111" stroke-width=".55" fill="none"/>
<path d="M656.4 495.7V499.9c.8-.3 1.4-.8 1.4-1.4s-.9-.6-1.4 0" stroke="#111" stroke-width=".55" fill="none"/>
<text x="633" y="499.4" font-family="Liberation Serif" font-size="5" text-anchor="end" fill="#1a1a1a">Timp.</text>
<path d="M641 515.50H674M641 517.62H674M641 519.74H674M641 521.86H674M641 523.98H674" stroke="#8a8a8a" stroke-width="0.45" fill="none"/>
<path d="M646.9 526.7c-.9.3-1.6-.3-1-1M646.9 526.7L647.4 513.1c.9-.5 1.4 1 .3 2.4-1.3 1.5-2.9 2.6-2.9 4.6 0 1.6 1.2 2.6 2.4 2.5 1.3-.2 1.5-2.3.2-2.6-.9-.2-1.6.6-1.2 1.4" stroke="#111" stroke-width="0.85" fill="none"/>
<path d="M652.0 516.7V520.9000000000001c.8-.3 1.4-.8 1.4-1.4s-.9-.6-1.4 0" stroke="#111" stroke-width=".55" fill="none"/>
<path d="M654.2 513.6V517.8000000000001c.8-.3 1.4-.8 1.4-1.4s-.9-.6-1.4 0" stroke="#111" stroke-width=".55" fill="none"/>
<path d="M656.4 517.8V522.0c.8-.3 1.4-.8 1.4-1.4s-.9-.6-1.4 0" stroke="#111" stroke-width=".55" fill="none"/>
<text x="633" y="521.5" font-family="Liberation Serif" font-size="5" text-anchor="end" fill="#1a1a1a">Vln. I</text>
<path d="M641 538.00H674M641 540.12H674M641 542.24H674M641 544.36H674M641 546.48H674" stroke="#8a8a8a" stroke-width="0.45" fill="none"/>
<path d="M646.9 549.2c-.9.3-1.6-.3-1-1M646.9 549.2L647.4 535.6c.9-.5 1.4 1 .3 2.4-1.3 1.5-2.9 2.6-2.9 4.6 0 1.6 1.2 2.6 2.4 2.5 1.3-.2 1.5-2.3.2-2.6-.9-.2-1.6.6-1.2 1.4" stroke="#111" stroke-width="0.85" fill="none"/>
<path d="M652.0 539.2V543.4000000000001c.8-.3 1.4-.8 1.4-1.4s-.9-.6-1.4 0" stroke="#111" stroke-width=".55" fill="none"/>
<path d="M654.2 536.1V540.3000000000001c.8-.3 1.4-.8 1.4-1.4s-.9-.6-1.4 0" stroke="#111" stroke-width=".55" fill="none"/>
<path d="M656.4 540.3V544.5c.8-.3 1.4-.8 1.4-1.4s-.9-.6-1.4 0" stroke="#111" stroke-width=".55" fill="none"/>
<text x="633" y="544" font-family="Liberation Serif" font-size="5" text-anchor="end" fill="#1a1a1a">Vln. II</text>
<path d="M641 560.00H674M641 562.12H674M641 564.24H674M641 566.36H674M641 568.48H674" stroke="#8a8a8a" stroke-width="0.45" fill="none"/>
<rect x="645.0" y="559.7" width="1.5" height="9" fill="#111"/><path d="M647.2 559.7V568.7" stroke="#111" stroke-width=".5"/><path d="M647.7 564.2c1.5-.8 2-2.5 2.6-4M647.7 564.2c1.5.8 2 2.5 2.6 4" stroke="#111" stroke-width=".9" fill="none"/>
<path d="M652.0 561.2V565.4000000000001c.8-.3 1.4-.8 1.4-1.4s-.9-.6-1.4 0" stroke="#111" stroke-width=".55" fill="none"/>
<path d="M654.2 558.1V562.3000000000001c.8-.3 1.4-.8 1.4-1.4s-.9-.6-1.4 0" stroke="#111" stroke-width=".55" fill="none"/>
<path d="M656.4 562.3V566.5c.8-.3 1.4-.8 1.4-1.4s-.9-.6-1.4 0" stroke="#111" stroke-width=".55" fill="none"/>
<text x="633" y="566" font-family="Liberation Serif" font-size="5" text-anchor="end" fill="#1a1a1a">Vla.</text>
<path d="M641 582.00H674M641 584.12H674M641 586.24H674M641 588.36H674M641 590.48H674" stroke="#8a8a8a" stroke-width="0.45" fill="none"/>
<path d="M645.3 583.9c.8-2 3.8-1.8 3.5.8-.2 2-1.9 3.2-3.5 3.9" stroke="#111" stroke-width="1" fill="none"/><circle cx="645.6" cy="584.3" r=".8" fill="#111"/><circle cx="649.7" cy="583.3" r=".45" fill="#111"/><circle cx="649.7" cy="585" r=".45" fill="#111"/>
<path d="M652.0 583.2V587.4000000000001c.8-.3 1.4-.8 1.4-1.4s-.9-.6-1.4 0" stroke="#111" stroke-width=".55" fill="none"/>
<path d="M654.2 580.1V584.3000000000001c.8-.3 1.4-.8 1.4-1.4s-.9-.6-1.4 0" stroke="#111" stroke-width=".55" fill="none"/>
<path d="M656.4 584.3V588.5c.8-.3 1.4-.8 1.4-1.4s-.9-.6-1.4 0" stroke="#111" stroke-width=".55" fill="none"/>
<text x="633" y="588" font-family="Liberation Serif" font-size="5" text-anchor="end" fill="#1a1a1a">Vc.</text>
<path d="M641 604.00H674M641 606.12H674M641 608.24H674M641 610.36H674M641 612.48H674" stroke="#8a8a8a" stroke-width="0.45" fill="none"/>
<path d="M645.3 605.9c.8-2 3.8-1.8 3.5.8-.2 2-1.9 3.2-3.5 3.9" stroke="#111" stroke-width="1" fill="none"/><circle cx="645.6" cy="606.3" r=".8" fill="#111"/><circle cx="649.7" cy="605.3" r=".45" fill="#111"/><circle cx="649.7" cy="607" r=".45" fill="#111"/>
<path d="M652.0 605.2V609.4000000000001c.8-.3 1.4-.8 1.4-1.4s-.9-.6-1.4 0" stroke="#111" stroke-width=".55" fill="none"/>
<path d="M654.2 602.1V606.3000000000001c.8-.3 1.4-.8 1.4-1.4s-.9-.6-1.4 0" stroke="#111" stroke-width=".55" fill="none"/>
<path d="M656.4 606.3V610.5c.8-.3 1.4-.8 1.4-1.4s-.9-.6-1.4 0" stroke="#111" stroke-width=".55" fill="none"/>
<text x="633" y="610" font-family="Liberation Serif" font-size="5" text-anchor="end" fill="#1a1a1a">Cb.</text>
<path d="M641.3 335.5V413.58" stroke="#222" stroke-width="1.5"/>
<path d="M660.8 337V412.08" stroke="#222" stroke-width="1.6"/>
<path d="M641.3 424.9V481.48" stroke="#222" stroke-width="1.5"/>
<path d="M660.8 426.4V479.98" stroke="#222" stroke-width="1.6"/>
<path d="M641.3 491.9V503.38" stroke="#222" stroke-width="1.5"/>
<path d="M660.8 493.4V501.88" stroke="#222" stroke-width="1.6"/>
<path d="M641.3 514.0V613.98" stroke="#222" stroke-width="1.5"/>
<path d="M660.8 515.5V612.48" stroke="#222" stroke-width="1.6"/>
<path d="M643 337V612.48" stroke="#444" stroke-width=".6"/>
<path d="M639.5 423.5c-3 2-1 8-1.2 12.5 0 3-1.3 5.5-2.3 6 1 .5 2.3 3 2.3 6-.2 4.5-1.8 10.5 1.2 12.5" stroke="#333" stroke-width="0.8" fill="none"/>
<rect x="668" y="360.7" width="3" height="2" fill="#222"/><rect x="668" y="365.2" width="3" height="2" fill="#222"/><path d="M668 359.2V368.2" stroke="#222" stroke-width=".5"/>
<rect x="668" y="383.0" width="3" height="2" fill="#222"/><rect x="668" y="387.5" width="3" height="2" fill="#222"/><path d="M668 381.5V390.5" stroke="#222" stroke-width=".5"/>
<text x="670" y="469" font-family="Liberation Serif" font-size="4.5" fill="#333">Mi</text>
</g>
</svg>
</body></html>
